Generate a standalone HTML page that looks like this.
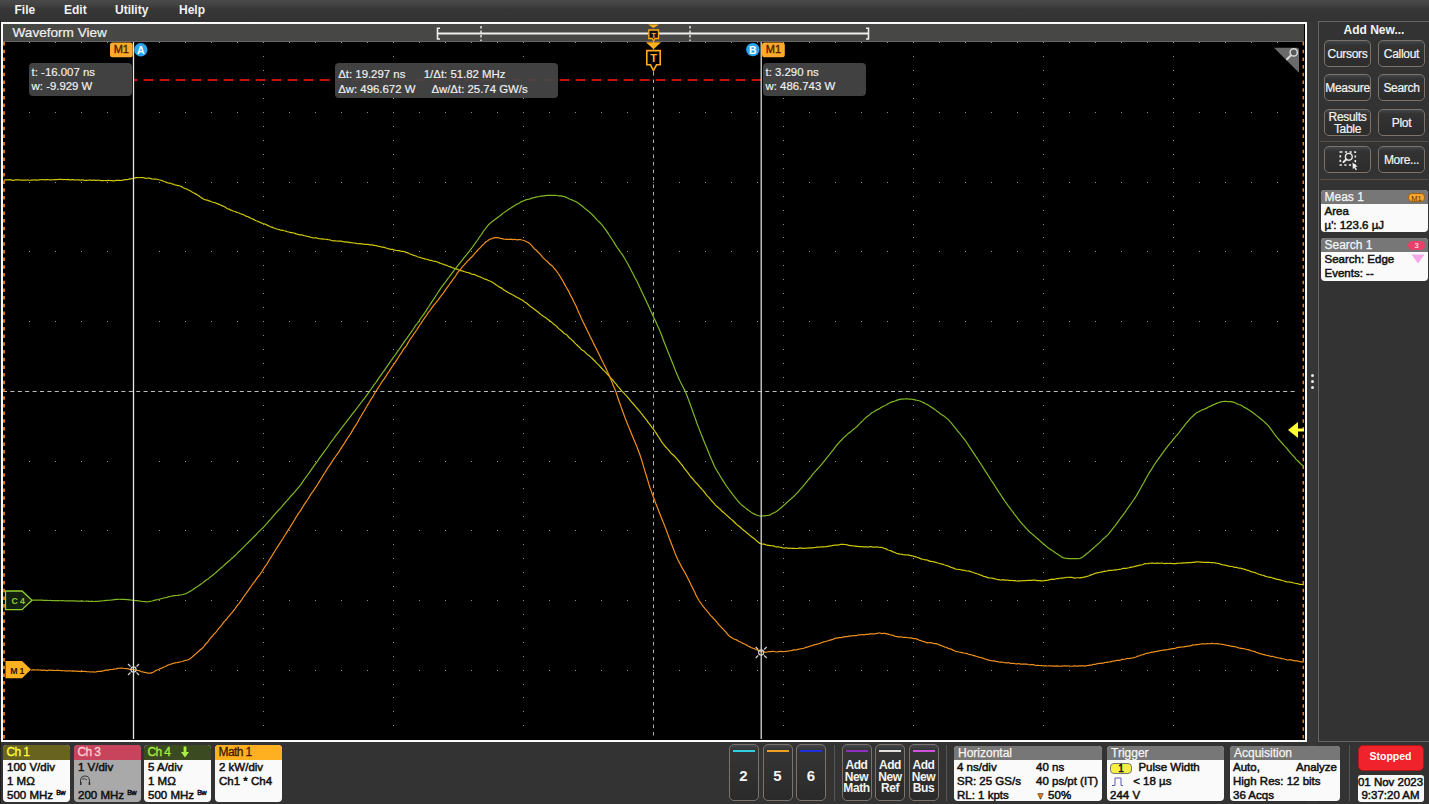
<!DOCTYPE html>
<html><head><meta charset="utf-8">
<style>
*{box-sizing:border-box;margin:0;padding:0}
html,body{width:1429px;height:804px;overflow:hidden;background:#333333;font-family:"Liberation Sans",sans-serif;}
.a{position:absolute}
#menu{left:0;top:0;width:1429px;height:21px;background:linear-gradient(#4a4a4a 0,#404040 6px,#363636 9px,#333 21px);}
#menu span{position:absolute;top:3px;font-size:12px;font-weight:bold;color:#f2f2f2;}
#frame{left:1px;top:21.5px;width:1306px;height:720px;border:2.5px solid #fafafa;background:#000;}
#hdr{left:3px;top:24px;width:1301px;height:18px;background:#474745;border-bottom:1px solid #666;}
#hdr .t{position:absolute;left:9.5px;top:1px;font-size:13.6px;color:#f0f0f0;-webkit-text-stroke:0.2px #f0f0f0}
.ro{position:absolute;background:rgba(70,70,70,0.92);border-radius:4px;color:#f2f2f2;font-size:11.4px;-webkit-text-stroke:0.15px #f2f2f2;line-height:13.6px;padding:3px 0 0 3px;white-space:pre}
.btn{position:absolute;width:47px;height:27px;border:1px solid #7c746c;border-radius:5px;background:linear-gradient(#42464a 0,#333 4px,#2c2c2c 100%);color:#f4f4f4;font-size:12px;text-align:center;line-height:26px;letter-spacing:-0.3px;-webkit-text-stroke:0.2px #f4f4f4}
.badge{position:absolute;top:745px;height:57px;border-radius:4px;overflow:hidden;background:#fafafa;}
.badge .h{position:relative;height:14.5px;font-size:12px;line-height:15px;padding-left:3.5px;letter-spacing:-0.6px;-webkit-text-stroke:0.3px currentColor}
.badge .b{font-size:11.5px;font-weight:normal;-webkit-text-stroke:0.5px #111;color:#111;line-height:14px;padding-left:4px;padding-top:0.7px}
.box{position:absolute;top:746px;height:55px;border-radius:4px;overflow:hidden;background:#fafafa;}
.box .h{height:14px;background:#777;color:#f5f5f5;font-size:12px;line-height:14px;padding-left:4px;-webkit-text-stroke:0.25px #f5f5f5}
.box .b{position:relative;font-size:11.5px;font-weight:normal;-webkit-text-stroke:0.5px #111;color:#111;line-height:14px;}
.nb{position:absolute;top:744px;width:30px;height:57px;border:1px solid #7c746c;border-radius:5px;background:linear-gradient(#42464a 0,#353535 5px,#2a2a2a 100%);color:#f4f4f4;text-align:center;font-weight:bold;}
.nb i{position:absolute;left:3px;right:3px;top:5px;height:2px;}
</style></head><body>
<div id="menu" class="a"><span style="left:14.5px">File</span><span style="left:64px">Edit</span><span style="left:115px">Utility</span><span style="left:179px">Help</span></div>
<div class="a" style="left:0;top:21px;width:1px;height:783px;background:#1e1e1e"></div>
<div id="frame" class="a"></div>
<div id="hdr" class="a"><div class="t">Waveform View</div></div>

<svg class="a" style="left:0;top:0" width="1429" height="804" viewBox="0 0 1429 804">
<defs><clipPath id="pc"><rect x="3" y="42" width="1301" height="697"/></clipPath></defs>
<!-- timeline overview -->
<g stroke="#eeeeee" fill="none" stroke-width="1.6">
<path d="M440 28.2 H437.5 V39 H440"/>
<path d="M866 28.2 H868.5 V39 H866"/>
<line x1="438" y1="33.6" x2="868" y2="33.6" stroke-width="2"/>
<line x1="481" y1="26" x2="481" y2="41" stroke-dasharray="2.5 2" stroke-width="1.4"/>
<line x1="690" y1="26" x2="690" y2="41" stroke-dasharray="2.5 2" stroke-width="1.4"/>
</g>
<path d="M648 24.5 H659 L653.5 28 Z" fill="#ffb020"/>
<path d="M648.8 30 H658.5 V38.5 H655 L653.6 41 L652.2 38.5 H648.8 Z" fill="#111" stroke="#ffaa20" stroke-width="1.3"/>
<text x="653.6" y="37.6" font-size="8" font-weight="bold" fill="#ffb030" text-anchor="middle" font-family="Liberation Sans">T</text>

<g clip-path="url(#pc)">
<g fill="#909090"><rect x="29" y="42" width="1" height="1"/><rect x="55" y="42" width="1" height="1"/><rect x="81" y="42" width="1" height="1"/><rect x="107" y="42" width="1" height="1"/><rect x="133" y="42" width="1" height="1"/><rect x="159" y="42" width="1" height="1"/><rect x="185" y="42" width="1" height="1"/><rect x="211" y="42" width="1" height="1"/><rect x="237" y="42" width="1" height="1"/><rect x="263" y="42" width="1" height="1"/><rect x="289" y="42" width="1" height="1"/><rect x="315" y="42" width="1" height="1"/><rect x="341" y="42" width="1" height="1"/><rect x="367" y="42" width="1" height="1"/><rect x="393" y="42" width="1" height="1"/><rect x="419" y="42" width="1" height="1"/><rect x="445" y="42" width="1" height="1"/><rect x="471" y="42" width="1" height="1"/><rect x="497" y="42" width="1" height="1"/><rect x="523" y="42" width="1" height="1"/><rect x="549" y="42" width="1" height="1"/><rect x="575" y="42" width="1" height="1"/><rect x="601" y="42" width="1" height="1"/><rect x="627" y="42" width="1" height="1"/><rect x="653" y="42" width="1" height="1"/><rect x="679" y="42" width="1" height="1"/><rect x="705" y="42" width="1" height="1"/><rect x="731" y="42" width="1" height="1"/><rect x="757" y="42" width="1" height="1"/><rect x="783" y="42" width="1" height="1"/><rect x="809" y="42" width="1" height="1"/><rect x="835" y="42" width="1" height="1"/><rect x="861" y="42" width="1" height="1"/><rect x="887" y="42" width="1" height="1"/><rect x="913" y="42" width="1" height="1"/><rect x="939" y="42" width="1" height="1"/><rect x="965" y="42" width="1" height="1"/><rect x="991" y="42" width="1" height="1"/><rect x="1017" y="42" width="1" height="1"/><rect x="1043" y="42" width="1" height="1"/><rect x="1069" y="42" width="1" height="1"/><rect x="1095" y="42" width="1" height="1"/><rect x="1121" y="42" width="1" height="1"/><rect x="1147" y="42" width="1" height="1"/><rect x="1173" y="42" width="1" height="1"/><rect x="1199" y="42" width="1" height="1"/><rect x="1225" y="42" width="1" height="1"/><rect x="1251" y="42" width="1" height="1"/><rect x="1277" y="42" width="1" height="1"/><rect x="29" y="112" width="1" height="1"/><rect x="55" y="112" width="1" height="1"/><rect x="81" y="112" width="1" height="1"/><rect x="107" y="112" width="1" height="1"/><rect x="133" y="112" width="1" height="1"/><rect x="159" y="112" width="1" height="1"/><rect x="185" y="112" width="1" height="1"/><rect x="211" y="112" width="1" height="1"/><rect x="237" y="112" width="1" height="1"/><rect x="263" y="112" width="1" height="1"/><rect x="289" y="112" width="1" height="1"/><rect x="315" y="112" width="1" height="1"/><rect x="341" y="112" width="1" height="1"/><rect x="367" y="112" width="1" height="1"/><rect x="393" y="112" width="1" height="1"/><rect x="419" y="112" width="1" height="1"/><rect x="445" y="112" width="1" height="1"/><rect x="471" y="112" width="1" height="1"/><rect x="497" y="112" width="1" height="1"/><rect x="523" y="112" width="1" height="1"/><rect x="549" y="112" width="1" height="1"/><rect x="575" y="112" width="1" height="1"/><rect x="601" y="112" width="1" height="1"/><rect x="627" y="112" width="1" height="1"/><rect x="653" y="112" width="1" height="1"/><rect x="679" y="112" width="1" height="1"/><rect x="705" y="112" width="1" height="1"/><rect x="731" y="112" width="1" height="1"/><rect x="757" y="112" width="1" height="1"/><rect x="783" y="112" width="1" height="1"/><rect x="809" y="112" width="1" height="1"/><rect x="835" y="112" width="1" height="1"/><rect x="861" y="112" width="1" height="1"/><rect x="887" y="112" width="1" height="1"/><rect x="913" y="112" width="1" height="1"/><rect x="939" y="112" width="1" height="1"/><rect x="965" y="112" width="1" height="1"/><rect x="991" y="112" width="1" height="1"/><rect x="1017" y="112" width="1" height="1"/><rect x="1043" y="112" width="1" height="1"/><rect x="1069" y="112" width="1" height="1"/><rect x="1095" y="112" width="1" height="1"/><rect x="1121" y="112" width="1" height="1"/><rect x="1147" y="112" width="1" height="1"/><rect x="1173" y="112" width="1" height="1"/><rect x="1199" y="112" width="1" height="1"/><rect x="1225" y="112" width="1" height="1"/><rect x="1251" y="112" width="1" height="1"/><rect x="1277" y="112" width="1" height="1"/><rect x="29" y="182" width="1" height="1"/><rect x="55" y="182" width="1" height="1"/><rect x="81" y="182" width="1" height="1"/><rect x="107" y="182" width="1" height="1"/><rect x="133" y="182" width="1" height="1"/><rect x="159" y="182" width="1" height="1"/><rect x="185" y="182" width="1" height="1"/><rect x="211" y="182" width="1" height="1"/><rect x="237" y="182" width="1" height="1"/><rect x="263" y="182" width="1" height="1"/><rect x="289" y="182" width="1" height="1"/><rect x="315" y="182" width="1" height="1"/><rect x="341" y="182" width="1" height="1"/><rect x="367" y="182" width="1" height="1"/><rect x="393" y="182" width="1" height="1"/><rect x="419" y="182" width="1" height="1"/><rect x="445" y="182" width="1" height="1"/><rect x="471" y="182" width="1" height="1"/><rect x="497" y="182" width="1" height="1"/><rect x="523" y="182" width="1" height="1"/><rect x="549" y="182" width="1" height="1"/><rect x="575" y="182" width="1" height="1"/><rect x="601" y="182" width="1" height="1"/><rect x="627" y="182" width="1" height="1"/><rect x="653" y="182" width="1" height="1"/><rect x="679" y="182" width="1" height="1"/><rect x="705" y="182" width="1" height="1"/><rect x="731" y="182" width="1" height="1"/><rect x="757" y="182" width="1" height="1"/><rect x="783" y="182" width="1" height="1"/><rect x="809" y="182" width="1" height="1"/><rect x="835" y="182" width="1" height="1"/><rect x="861" y="182" width="1" height="1"/><rect x="887" y="182" width="1" height="1"/><rect x="913" y="182" width="1" height="1"/><rect x="939" y="182" width="1" height="1"/><rect x="965" y="182" width="1" height="1"/><rect x="991" y="182" width="1" height="1"/><rect x="1017" y="182" width="1" height="1"/><rect x="1043" y="182" width="1" height="1"/><rect x="1069" y="182" width="1" height="1"/><rect x="1095" y="182" width="1" height="1"/><rect x="1121" y="182" width="1" height="1"/><rect x="1147" y="182" width="1" height="1"/><rect x="1173" y="182" width="1" height="1"/><rect x="1199" y="182" width="1" height="1"/><rect x="1225" y="182" width="1" height="1"/><rect x="1251" y="182" width="1" height="1"/><rect x="1277" y="182" width="1" height="1"/><rect x="29" y="251" width="1" height="1"/><rect x="55" y="251" width="1" height="1"/><rect x="81" y="251" width="1" height="1"/><rect x="107" y="251" width="1" height="1"/><rect x="133" y="251" width="1" height="1"/><rect x="159" y="251" width="1" height="1"/><rect x="185" y="251" width="1" height="1"/><rect x="211" y="251" width="1" height="1"/><rect x="237" y="251" width="1" height="1"/><rect x="263" y="251" width="1" height="1"/><rect x="289" y="251" width="1" height="1"/><rect x="315" y="251" width="1" height="1"/><rect x="341" y="251" width="1" height="1"/><rect x="367" y="251" width="1" height="1"/><rect x="393" y="251" width="1" height="1"/><rect x="419" y="251" width="1" height="1"/><rect x="445" y="251" width="1" height="1"/><rect x="471" y="251" width="1" height="1"/><rect x="497" y="251" width="1" height="1"/><rect x="523" y="251" width="1" height="1"/><rect x="549" y="251" width="1" height="1"/><rect x="575" y="251" width="1" height="1"/><rect x="601" y="251" width="1" height="1"/><rect x="627" y="251" width="1" height="1"/><rect x="653" y="251" width="1" height="1"/><rect x="679" y="251" width="1" height="1"/><rect x="705" y="251" width="1" height="1"/><rect x="731" y="251" width="1" height="1"/><rect x="757" y="251" width="1" height="1"/><rect x="783" y="251" width="1" height="1"/><rect x="809" y="251" width="1" height="1"/><rect x="835" y="251" width="1" height="1"/><rect x="861" y="251" width="1" height="1"/><rect x="887" y="251" width="1" height="1"/><rect x="913" y="251" width="1" height="1"/><rect x="939" y="251" width="1" height="1"/><rect x="965" y="251" width="1" height="1"/><rect x="991" y="251" width="1" height="1"/><rect x="1017" y="251" width="1" height="1"/><rect x="1043" y="251" width="1" height="1"/><rect x="1069" y="251" width="1" height="1"/><rect x="1095" y="251" width="1" height="1"/><rect x="1121" y="251" width="1" height="1"/><rect x="1147" y="251" width="1" height="1"/><rect x="1173" y="251" width="1" height="1"/><rect x="1199" y="251" width="1" height="1"/><rect x="1225" y="251" width="1" height="1"/><rect x="1251" y="251" width="1" height="1"/><rect x="1277" y="251" width="1" height="1"/><rect x="29" y="321" width="1" height="1"/><rect x="55" y="321" width="1" height="1"/><rect x="81" y="321" width="1" height="1"/><rect x="107" y="321" width="1" height="1"/><rect x="133" y="321" width="1" height="1"/><rect x="159" y="321" width="1" height="1"/><rect x="185" y="321" width="1" height="1"/><rect x="211" y="321" width="1" height="1"/><rect x="237" y="321" width="1" height="1"/><rect x="263" y="321" width="1" height="1"/><rect x="289" y="321" width="1" height="1"/><rect x="315" y="321" width="1" height="1"/><rect x="341" y="321" width="1" height="1"/><rect x="367" y="321" width="1" height="1"/><rect x="393" y="321" width="1" height="1"/><rect x="419" y="321" width="1" height="1"/><rect x="445" y="321" width="1" height="1"/><rect x="471" y="321" width="1" height="1"/><rect x="497" y="321" width="1" height="1"/><rect x="523" y="321" width="1" height="1"/><rect x="549" y="321" width="1" height="1"/><rect x="575" y="321" width="1" height="1"/><rect x="601" y="321" width="1" height="1"/><rect x="627" y="321" width="1" height="1"/><rect x="653" y="321" width="1" height="1"/><rect x="679" y="321" width="1" height="1"/><rect x="705" y="321" width="1" height="1"/><rect x="731" y="321" width="1" height="1"/><rect x="757" y="321" width="1" height="1"/><rect x="783" y="321" width="1" height="1"/><rect x="809" y="321" width="1" height="1"/><rect x="835" y="321" width="1" height="1"/><rect x="861" y="321" width="1" height="1"/><rect x="887" y="321" width="1" height="1"/><rect x="913" y="321" width="1" height="1"/><rect x="939" y="321" width="1" height="1"/><rect x="965" y="321" width="1" height="1"/><rect x="991" y="321" width="1" height="1"/><rect x="1017" y="321" width="1" height="1"/><rect x="1043" y="321" width="1" height="1"/><rect x="1069" y="321" width="1" height="1"/><rect x="1095" y="321" width="1" height="1"/><rect x="1121" y="321" width="1" height="1"/><rect x="1147" y="321" width="1" height="1"/><rect x="1173" y="321" width="1" height="1"/><rect x="1199" y="321" width="1" height="1"/><rect x="1225" y="321" width="1" height="1"/><rect x="1251" y="321" width="1" height="1"/><rect x="1277" y="321" width="1" height="1"/><rect x="29" y="461" width="1" height="1"/><rect x="55" y="461" width="1" height="1"/><rect x="81" y="461" width="1" height="1"/><rect x="107" y="461" width="1" height="1"/><rect x="133" y="461" width="1" height="1"/><rect x="159" y="461" width="1" height="1"/><rect x="185" y="461" width="1" height="1"/><rect x="211" y="461" width="1" height="1"/><rect x="237" y="461" width="1" height="1"/><rect x="263" y="461" width="1" height="1"/><rect x="289" y="461" width="1" height="1"/><rect x="315" y="461" width="1" height="1"/><rect x="341" y="461" width="1" height="1"/><rect x="367" y="461" width="1" height="1"/><rect x="393" y="461" width="1" height="1"/><rect x="419" y="461" width="1" height="1"/><rect x="445" y="461" width="1" height="1"/><rect x="471" y="461" width="1" height="1"/><rect x="497" y="461" width="1" height="1"/><rect x="523" y="461" width="1" height="1"/><rect x="549" y="461" width="1" height="1"/><rect x="575" y="461" width="1" height="1"/><rect x="601" y="461" width="1" height="1"/><rect x="627" y="461" width="1" height="1"/><rect x="653" y="461" width="1" height="1"/><rect x="679" y="461" width="1" height="1"/><rect x="705" y="461" width="1" height="1"/><rect x="731" y="461" width="1" height="1"/><rect x="757" y="461" width="1" height="1"/><rect x="783" y="461" width="1" height="1"/><rect x="809" y="461" width="1" height="1"/><rect x="835" y="461" width="1" height="1"/><rect x="861" y="461" width="1" height="1"/><rect x="887" y="461" width="1" height="1"/><rect x="913" y="461" width="1" height="1"/><rect x="939" y="461" width="1" height="1"/><rect x="965" y="461" width="1" height="1"/><rect x="991" y="461" width="1" height="1"/><rect x="1017" y="461" width="1" height="1"/><rect x="1043" y="461" width="1" height="1"/><rect x="1069" y="461" width="1" height="1"/><rect x="1095" y="461" width="1" height="1"/><rect x="1121" y="461" width="1" height="1"/><rect x="1147" y="461" width="1" height="1"/><rect x="1173" y="461" width="1" height="1"/><rect x="1199" y="461" width="1" height="1"/><rect x="1225" y="461" width="1" height="1"/><rect x="1251" y="461" width="1" height="1"/><rect x="1277" y="461" width="1" height="1"/><rect x="29" y="530" width="1" height="1"/><rect x="55" y="530" width="1" height="1"/><rect x="81" y="530" width="1" height="1"/><rect x="107" y="530" width="1" height="1"/><rect x="133" y="530" width="1" height="1"/><rect x="159" y="530" width="1" height="1"/><rect x="185" y="530" width="1" height="1"/><rect x="211" y="530" width="1" height="1"/><rect x="237" y="530" width="1" height="1"/><rect x="263" y="530" width="1" height="1"/><rect x="289" y="530" width="1" height="1"/><rect x="315" y="530" width="1" height="1"/><rect x="341" y="530" width="1" height="1"/><rect x="367" y="530" width="1" height="1"/><rect x="393" y="530" width="1" height="1"/><rect x="419" y="530" width="1" height="1"/><rect x="445" y="530" width="1" height="1"/><rect x="471" y="530" width="1" height="1"/><rect x="497" y="530" width="1" height="1"/><rect x="523" y="530" width="1" height="1"/><rect x="549" y="530" width="1" height="1"/><rect x="575" y="530" width="1" height="1"/><rect x="601" y="530" width="1" height="1"/><rect x="627" y="530" width="1" height="1"/><rect x="653" y="530" width="1" height="1"/><rect x="679" y="530" width="1" height="1"/><rect x="705" y="530" width="1" height="1"/><rect x="731" y="530" width="1" height="1"/><rect x="757" y="530" width="1" height="1"/><rect x="783" y="530" width="1" height="1"/><rect x="809" y="530" width="1" height="1"/><rect x="835" y="530" width="1" height="1"/><rect x="861" y="530" width="1" height="1"/><rect x="887" y="530" width="1" height="1"/><rect x="913" y="530" width="1" height="1"/><rect x="939" y="530" width="1" height="1"/><rect x="965" y="530" width="1" height="1"/><rect x="991" y="530" width="1" height="1"/><rect x="1017" y="530" width="1" height="1"/><rect x="1043" y="530" width="1" height="1"/><rect x="1069" y="530" width="1" height="1"/><rect x="1095" y="530" width="1" height="1"/><rect x="1121" y="530" width="1" height="1"/><rect x="1147" y="530" width="1" height="1"/><rect x="1173" y="530" width="1" height="1"/><rect x="1199" y="530" width="1" height="1"/><rect x="1225" y="530" width="1" height="1"/><rect x="1251" y="530" width="1" height="1"/><rect x="1277" y="530" width="1" height="1"/><rect x="29" y="600" width="1" height="1"/><rect x="55" y="600" width="1" height="1"/><rect x="81" y="600" width="1" height="1"/><rect x="107" y="600" width="1" height="1"/><rect x="133" y="600" width="1" height="1"/><rect x="159" y="600" width="1" height="1"/><rect x="185" y="600" width="1" height="1"/><rect x="211" y="600" width="1" height="1"/><rect x="237" y="600" width="1" height="1"/><rect x="263" y="600" width="1" height="1"/><rect x="289" y="600" width="1" height="1"/><rect x="315" y="600" width="1" height="1"/><rect x="341" y="600" width="1" height="1"/><rect x="367" y="600" width="1" height="1"/><rect x="393" y="600" width="1" height="1"/><rect x="419" y="600" width="1" height="1"/><rect x="445" y="600" width="1" height="1"/><rect x="471" y="600" width="1" height="1"/><rect x="497" y="600" width="1" height="1"/><rect x="523" y="600" width="1" height="1"/><rect x="549" y="600" width="1" height="1"/><rect x="575" y="600" width="1" height="1"/><rect x="601" y="600" width="1" height="1"/><rect x="627" y="600" width="1" height="1"/><rect x="653" y="600" width="1" height="1"/><rect x="679" y="600" width="1" height="1"/><rect x="705" y="600" width="1" height="1"/><rect x="731" y="600" width="1" height="1"/><rect x="757" y="600" width="1" height="1"/><rect x="783" y="600" width="1" height="1"/><rect x="809" y="600" width="1" height="1"/><rect x="835" y="600" width="1" height="1"/><rect x="861" y="600" width="1" height="1"/><rect x="887" y="600" width="1" height="1"/><rect x="913" y="600" width="1" height="1"/><rect x="939" y="600" width="1" height="1"/><rect x="965" y="600" width="1" height="1"/><rect x="991" y="600" width="1" height="1"/><rect x="1017" y="600" width="1" height="1"/><rect x="1043" y="600" width="1" height="1"/><rect x="1069" y="600" width="1" height="1"/><rect x="1095" y="600" width="1" height="1"/><rect x="1121" y="600" width="1" height="1"/><rect x="1147" y="600" width="1" height="1"/><rect x="1173" y="600" width="1" height="1"/><rect x="1199" y="600" width="1" height="1"/><rect x="1225" y="600" width="1" height="1"/><rect x="1251" y="600" width="1" height="1"/><rect x="1277" y="600" width="1" height="1"/><rect x="29" y="670" width="1" height="1"/><rect x="55" y="670" width="1" height="1"/><rect x="81" y="670" width="1" height="1"/><rect x="107" y="670" width="1" height="1"/><rect x="133" y="670" width="1" height="1"/><rect x="159" y="670" width="1" height="1"/><rect x="185" y="670" width="1" height="1"/><rect x="211" y="670" width="1" height="1"/><rect x="237" y="670" width="1" height="1"/><rect x="263" y="670" width="1" height="1"/><rect x="289" y="670" width="1" height="1"/><rect x="315" y="670" width="1" height="1"/><rect x="341" y="670" width="1" height="1"/><rect x="367" y="670" width="1" height="1"/><rect x="393" y="670" width="1" height="1"/><rect x="419" y="670" width="1" height="1"/><rect x="445" y="670" width="1" height="1"/><rect x="471" y="670" width="1" height="1"/><rect x="497" y="670" width="1" height="1"/><rect x="523" y="670" width="1" height="1"/><rect x="549" y="670" width="1" height="1"/><rect x="575" y="670" width="1" height="1"/><rect x="601" y="670" width="1" height="1"/><rect x="627" y="670" width="1" height="1"/><rect x="653" y="670" width="1" height="1"/><rect x="679" y="670" width="1" height="1"/><rect x="705" y="670" width="1" height="1"/><rect x="731" y="670" width="1" height="1"/><rect x="757" y="670" width="1" height="1"/><rect x="783" y="670" width="1" height="1"/><rect x="809" y="670" width="1" height="1"/><rect x="835" y="670" width="1" height="1"/><rect x="861" y="670" width="1" height="1"/><rect x="887" y="670" width="1" height="1"/><rect x="913" y="670" width="1" height="1"/><rect x="939" y="670" width="1" height="1"/><rect x="965" y="670" width="1" height="1"/><rect x="991" y="670" width="1" height="1"/><rect x="1017" y="670" width="1" height="1"/><rect x="1043" y="670" width="1" height="1"/><rect x="1069" y="670" width="1" height="1"/><rect x="1095" y="670" width="1" height="1"/><rect x="1121" y="670" width="1" height="1"/><rect x="1147" y="670" width="1" height="1"/><rect x="1173" y="670" width="1" height="1"/><rect x="1199" y="670" width="1" height="1"/><rect x="1225" y="670" width="1" height="1"/><rect x="1251" y="670" width="1" height="1"/><rect x="1277" y="670" width="1" height="1"/><rect x="133" y="56" width="1" height="1"/><rect x="133" y="70" width="1" height="1"/><rect x="133" y="84" width="1" height="1"/><rect x="133" y="98" width="1" height="1"/><rect x="133" y="126" width="1" height="1"/><rect x="133" y="140" width="1" height="1"/><rect x="133" y="154" width="1" height="1"/><rect x="133" y="168" width="1" height="1"/><rect x="133" y="196" width="1" height="1"/><rect x="133" y="210" width="1" height="1"/><rect x="133" y="224" width="1" height="1"/><rect x="133" y="237" width="1" height="1"/><rect x="133" y="265" width="1" height="1"/><rect x="133" y="279" width="1" height="1"/><rect x="133" y="293" width="1" height="1"/><rect x="133" y="307" width="1" height="1"/><rect x="133" y="335" width="1" height="1"/><rect x="133" y="349" width="1" height="1"/><rect x="133" y="363" width="1" height="1"/><rect x="133" y="377" width="1" height="1"/><rect x="133" y="405" width="1" height="1"/><rect x="133" y="419" width="1" height="1"/><rect x="133" y="433" width="1" height="1"/><rect x="133" y="447" width="1" height="1"/><rect x="133" y="474" width="1" height="1"/><rect x="133" y="488" width="1" height="1"/><rect x="133" y="502" width="1" height="1"/><rect x="133" y="516" width="1" height="1"/><rect x="133" y="544" width="1" height="1"/><rect x="133" y="558" width="1" height="1"/><rect x="133" y="572" width="1" height="1"/><rect x="133" y="586" width="1" height="1"/><rect x="133" y="614" width="1" height="1"/><rect x="133" y="628" width="1" height="1"/><rect x="133" y="642" width="1" height="1"/><rect x="133" y="656" width="1" height="1"/><rect x="133" y="684" width="1" height="1"/><rect x="133" y="697" width="1" height="1"/><rect x="133" y="711" width="1" height="1"/><rect x="133" y="725" width="1" height="1"/><rect x="263" y="56" width="1" height="1"/><rect x="263" y="70" width="1" height="1"/><rect x="263" y="84" width="1" height="1"/><rect x="263" y="98" width="1" height="1"/><rect x="263" y="126" width="1" height="1"/><rect x="263" y="140" width="1" height="1"/><rect x="263" y="154" width="1" height="1"/><rect x="263" y="168" width="1" height="1"/><rect x="263" y="196" width="1" height="1"/><rect x="263" y="210" width="1" height="1"/><rect x="263" y="224" width="1" height="1"/><rect x="263" y="237" width="1" height="1"/><rect x="263" y="265" width="1" height="1"/><rect x="263" y="279" width="1" height="1"/><rect x="263" y="293" width="1" height="1"/><rect x="263" y="307" width="1" height="1"/><rect x="263" y="335" width="1" height="1"/><rect x="263" y="349" width="1" height="1"/><rect x="263" y="363" width="1" height="1"/><rect x="263" y="377" width="1" height="1"/><rect x="263" y="405" width="1" height="1"/><rect x="263" y="419" width="1" height="1"/><rect x="263" y="433" width="1" height="1"/><rect x="263" y="447" width="1" height="1"/><rect x="263" y="474" width="1" height="1"/><rect x="263" y="488" width="1" height="1"/><rect x="263" y="502" width="1" height="1"/><rect x="263" y="516" width="1" height="1"/><rect x="263" y="544" width="1" height="1"/><rect x="263" y="558" width="1" height="1"/><rect x="263" y="572" width="1" height="1"/><rect x="263" y="586" width="1" height="1"/><rect x="263" y="614" width="1" height="1"/><rect x="263" y="628" width="1" height="1"/><rect x="263" y="642" width="1" height="1"/><rect x="263" y="656" width="1" height="1"/><rect x="263" y="684" width="1" height="1"/><rect x="263" y="697" width="1" height="1"/><rect x="263" y="711" width="1" height="1"/><rect x="263" y="725" width="1" height="1"/><rect x="393" y="56" width="1" height="1"/><rect x="393" y="70" width="1" height="1"/><rect x="393" y="84" width="1" height="1"/><rect x="393" y="98" width="1" height="1"/><rect x="393" y="126" width="1" height="1"/><rect x="393" y="140" width="1" height="1"/><rect x="393" y="154" width="1" height="1"/><rect x="393" y="168" width="1" height="1"/><rect x="393" y="196" width="1" height="1"/><rect x="393" y="210" width="1" height="1"/><rect x="393" y="224" width="1" height="1"/><rect x="393" y="237" width="1" height="1"/><rect x="393" y="265" width="1" height="1"/><rect x="393" y="279" width="1" height="1"/><rect x="393" y="293" width="1" height="1"/><rect x="393" y="307" width="1" height="1"/><rect x="393" y="335" width="1" height="1"/><rect x="393" y="349" width="1" height="1"/><rect x="393" y="363" width="1" height="1"/><rect x="393" y="377" width="1" height="1"/><rect x="393" y="405" width="1" height="1"/><rect x="393" y="419" width="1" height="1"/><rect x="393" y="433" width="1" height="1"/><rect x="393" y="447" width="1" height="1"/><rect x="393" y="474" width="1" height="1"/><rect x="393" y="488" width="1" height="1"/><rect x="393" y="502" width="1" height="1"/><rect x="393" y="516" width="1" height="1"/><rect x="393" y="544" width="1" height="1"/><rect x="393" y="558" width="1" height="1"/><rect x="393" y="572" width="1" height="1"/><rect x="393" y="586" width="1" height="1"/><rect x="393" y="614" width="1" height="1"/><rect x="393" y="628" width="1" height="1"/><rect x="393" y="642" width="1" height="1"/><rect x="393" y="656" width="1" height="1"/><rect x="393" y="684" width="1" height="1"/><rect x="393" y="697" width="1" height="1"/><rect x="393" y="711" width="1" height="1"/><rect x="393" y="725" width="1" height="1"/><rect x="523" y="56" width="1" height="1"/><rect x="523" y="70" width="1" height="1"/><rect x="523" y="84" width="1" height="1"/><rect x="523" y="98" width="1" height="1"/><rect x="523" y="126" width="1" height="1"/><rect x="523" y="140" width="1" height="1"/><rect x="523" y="154" width="1" height="1"/><rect x="523" y="168" width="1" height="1"/><rect x="523" y="196" width="1" height="1"/><rect x="523" y="210" width="1" height="1"/><rect x="523" y="224" width="1" height="1"/><rect x="523" y="237" width="1" height="1"/><rect x="523" y="265" width="1" height="1"/><rect x="523" y="279" width="1" height="1"/><rect x="523" y="293" width="1" height="1"/><rect x="523" y="307" width="1" height="1"/><rect x="523" y="335" width="1" height="1"/><rect x="523" y="349" width="1" height="1"/><rect x="523" y="363" width="1" height="1"/><rect x="523" y="377" width="1" height="1"/><rect x="523" y="405" width="1" height="1"/><rect x="523" y="419" width="1" height="1"/><rect x="523" y="433" width="1" height="1"/><rect x="523" y="447" width="1" height="1"/><rect x="523" y="474" width="1" height="1"/><rect x="523" y="488" width="1" height="1"/><rect x="523" y="502" width="1" height="1"/><rect x="523" y="516" width="1" height="1"/><rect x="523" y="544" width="1" height="1"/><rect x="523" y="558" width="1" height="1"/><rect x="523" y="572" width="1" height="1"/><rect x="523" y="586" width="1" height="1"/><rect x="523" y="614" width="1" height="1"/><rect x="523" y="628" width="1" height="1"/><rect x="523" y="642" width="1" height="1"/><rect x="523" y="656" width="1" height="1"/><rect x="523" y="684" width="1" height="1"/><rect x="523" y="697" width="1" height="1"/><rect x="523" y="711" width="1" height="1"/><rect x="523" y="725" width="1" height="1"/><rect x="783" y="56" width="1" height="1"/><rect x="783" y="70" width="1" height="1"/><rect x="783" y="84" width="1" height="1"/><rect x="783" y="98" width="1" height="1"/><rect x="783" y="126" width="1" height="1"/><rect x="783" y="140" width="1" height="1"/><rect x="783" y="154" width="1" height="1"/><rect x="783" y="168" width="1" height="1"/><rect x="783" y="196" width="1" height="1"/><rect x="783" y="210" width="1" height="1"/><rect x="783" y="224" width="1" height="1"/><rect x="783" y="237" width="1" height="1"/><rect x="783" y="265" width="1" height="1"/><rect x="783" y="279" width="1" height="1"/><rect x="783" y="293" width="1" height="1"/><rect x="783" y="307" width="1" height="1"/><rect x="783" y="335" width="1" height="1"/><rect x="783" y="349" width="1" height="1"/><rect x="783" y="363" width="1" height="1"/><rect x="783" y="377" width="1" height="1"/><rect x="783" y="405" width="1" height="1"/><rect x="783" y="419" width="1" height="1"/><rect x="783" y="433" width="1" height="1"/><rect x="783" y="447" width="1" height="1"/><rect x="783" y="474" width="1" height="1"/><rect x="783" y="488" width="1" height="1"/><rect x="783" y="502" width="1" height="1"/><rect x="783" y="516" width="1" height="1"/><rect x="783" y="544" width="1" height="1"/><rect x="783" y="558" width="1" height="1"/><rect x="783" y="572" width="1" height="1"/><rect x="783" y="586" width="1" height="1"/><rect x="783" y="614" width="1" height="1"/><rect x="783" y="628" width="1" height="1"/><rect x="783" y="642" width="1" height="1"/><rect x="783" y="656" width="1" height="1"/><rect x="783" y="684" width="1" height="1"/><rect x="783" y="697" width="1" height="1"/><rect x="783" y="711" width="1" height="1"/><rect x="783" y="725" width="1" height="1"/><rect x="913" y="56" width="1" height="1"/><rect x="913" y="70" width="1" height="1"/><rect x="913" y="84" width="1" height="1"/><rect x="913" y="98" width="1" height="1"/><rect x="913" y="126" width="1" height="1"/><rect x="913" y="140" width="1" height="1"/><rect x="913" y="154" width="1" height="1"/><rect x="913" y="168" width="1" height="1"/><rect x="913" y="196" width="1" height="1"/><rect x="913" y="210" width="1" height="1"/><rect x="913" y="224" width="1" height="1"/><rect x="913" y="237" width="1" height="1"/><rect x="913" y="265" width="1" height="1"/><rect x="913" y="279" width="1" height="1"/><rect x="913" y="293" width="1" height="1"/><rect x="913" y="307" width="1" height="1"/><rect x="913" y="335" width="1" height="1"/><rect x="913" y="349" width="1" height="1"/><rect x="913" y="363" width="1" height="1"/><rect x="913" y="377" width="1" height="1"/><rect x="913" y="405" width="1" height="1"/><rect x="913" y="419" width="1" height="1"/><rect x="913" y="433" width="1" height="1"/><rect x="913" y="447" width="1" height="1"/><rect x="913" y="474" width="1" height="1"/><rect x="913" y="488" width="1" height="1"/><rect x="913" y="502" width="1" height="1"/><rect x="913" y="516" width="1" height="1"/><rect x="913" y="544" width="1" height="1"/><rect x="913" y="558" width="1" height="1"/><rect x="913" y="572" width="1" height="1"/><rect x="913" y="586" width="1" height="1"/><rect x="913" y="614" width="1" height="1"/><rect x="913" y="628" width="1" height="1"/><rect x="913" y="642" width="1" height="1"/><rect x="913" y="656" width="1" height="1"/><rect x="913" y="684" width="1" height="1"/><rect x="913" y="697" width="1" height="1"/><rect x="913" y="711" width="1" height="1"/><rect x="913" y="725" width="1" height="1"/><rect x="1043" y="56" width="1" height="1"/><rect x="1043" y="70" width="1" height="1"/><rect x="1043" y="84" width="1" height="1"/><rect x="1043" y="98" width="1" height="1"/><rect x="1043" y="126" width="1" height="1"/><rect x="1043" y="140" width="1" height="1"/><rect x="1043" y="154" width="1" height="1"/><rect x="1043" y="168" width="1" height="1"/><rect x="1043" y="196" width="1" height="1"/><rect x="1043" y="210" width="1" height="1"/><rect x="1043" y="224" width="1" height="1"/><rect x="1043" y="237" width="1" height="1"/><rect x="1043" y="265" width="1" height="1"/><rect x="1043" y="279" width="1" height="1"/><rect x="1043" y="293" width="1" height="1"/><rect x="1043" y="307" width="1" height="1"/><rect x="1043" y="335" width="1" height="1"/><rect x="1043" y="349" width="1" height="1"/><rect x="1043" y="363" width="1" height="1"/><rect x="1043" y="377" width="1" height="1"/><rect x="1043" y="405" width="1" height="1"/><rect x="1043" y="419" width="1" height="1"/><rect x="1043" y="433" width="1" height="1"/><rect x="1043" y="447" width="1" height="1"/><rect x="1043" y="474" width="1" height="1"/><rect x="1043" y="488" width="1" height="1"/><rect x="1043" y="502" width="1" height="1"/><rect x="1043" y="516" width="1" height="1"/><rect x="1043" y="544" width="1" height="1"/><rect x="1043" y="558" width="1" height="1"/><rect x="1043" y="572" width="1" height="1"/><rect x="1043" y="586" width="1" height="1"/><rect x="1043" y="614" width="1" height="1"/><rect x="1043" y="628" width="1" height="1"/><rect x="1043" y="642" width="1" height="1"/><rect x="1043" y="656" width="1" height="1"/><rect x="1043" y="684" width="1" height="1"/><rect x="1043" y="697" width="1" height="1"/><rect x="1043" y="711" width="1" height="1"/><rect x="1043" y="725" width="1" height="1"/><rect x="1173" y="56" width="1" height="1"/><rect x="1173" y="70" width="1" height="1"/><rect x="1173" y="84" width="1" height="1"/><rect x="1173" y="98" width="1" height="1"/><rect x="1173" y="126" width="1" height="1"/><rect x="1173" y="140" width="1" height="1"/><rect x="1173" y="154" width="1" height="1"/><rect x="1173" y="168" width="1" height="1"/><rect x="1173" y="196" width="1" height="1"/><rect x="1173" y="210" width="1" height="1"/><rect x="1173" y="224" width="1" height="1"/><rect x="1173" y="237" width="1" height="1"/><rect x="1173" y="265" width="1" height="1"/><rect x="1173" y="279" width="1" height="1"/><rect x="1173" y="293" width="1" height="1"/><rect x="1173" y="307" width="1" height="1"/><rect x="1173" y="335" width="1" height="1"/><rect x="1173" y="349" width="1" height="1"/><rect x="1173" y="363" width="1" height="1"/><rect x="1173" y="377" width="1" height="1"/><rect x="1173" y="405" width="1" height="1"/><rect x="1173" y="419" width="1" height="1"/><rect x="1173" y="433" width="1" height="1"/><rect x="1173" y="447" width="1" height="1"/><rect x="1173" y="474" width="1" height="1"/><rect x="1173" y="488" width="1" height="1"/><rect x="1173" y="502" width="1" height="1"/><rect x="1173" y="516" width="1" height="1"/><rect x="1173" y="544" width="1" height="1"/><rect x="1173" y="558" width="1" height="1"/><rect x="1173" y="572" width="1" height="1"/><rect x="1173" y="586" width="1" height="1"/><rect x="1173" y="614" width="1" height="1"/><rect x="1173" y="628" width="1" height="1"/><rect x="1173" y="642" width="1" height="1"/><rect x="1173" y="656" width="1" height="1"/><rect x="1173" y="684" width="1" height="1"/><rect x="1173" y="697" width="1" height="1"/><rect x="1173" y="711" width="1" height="1"/><rect x="1173" y="725" width="1" height="1"/></g>
<line x1="3" y1="391.5" x2="1296" y2="391.5" stroke="#bdbdbd" stroke-width="1" stroke-dasharray="4 3.4"/>
<line x1="653.5" y1="42" x2="653.5" y2="739" stroke="#b0b0b0" stroke-width="1" stroke-dasharray="3.5 4"/>
<!-- orange dashed borders -->
<line x1="4" y1="42" x2="4" y2="739" stroke="#e8821a" stroke-width="1.8" stroke-dasharray="3.5 4.2"/>
<line x1="1303.3" y1="42" x2="1303.3" y2="739" stroke="#e8821a" stroke-width="1.4" stroke-dasharray="3.5 4.2"/>
<!-- red dashed cursor line -->
<line x1="134" y1="80" x2="761" y2="80" stroke="#c81010" stroke-width="2" stroke-dasharray="10 6" stroke-dashoffset="6.4"/>
<!-- traces -->
<path d="M4.0 180.21 L5.0 179.83 L6.0 179.88 L7.0 179.91 L8.0 179.89 L9.0 179.83 L10.0 179.72 L11.0 179.82 L12.0 180.06 L13.0 180.37 L14.0 180.19 L15.0 179.97 L16.0 179.90 L17.0 179.84 L18.0 179.81 L19.0 179.91 L20.0 180.02 L21.0 180.05 L22.0 180.10 L23.0 180.04 L24.0 180.09 L25.0 180.22 L26.0 180.13 L27.0 179.97 L28.0 179.99 L29.0 180.16 L30.0 180.25 L31.0 180.06 L32.0 180.00 L33.0 180.03 L34.0 179.90 L35.0 179.92 L36.0 180.05 L37.0 180.04 L38.0 179.97 L39.0 179.81 L40.0 179.60 L41.0 179.74 L42.0 179.65 L43.0 179.57 L44.0 179.76 L45.0 179.83 L46.0 179.67 L47.0 179.58 L48.0 179.66 L49.0 179.77 L50.0 179.89 L51.0 179.85 L52.0 179.78 L53.0 179.76 L54.0 179.60 L55.0 179.50 L56.0 179.62 L57.0 179.64 L58.0 179.51 L59.0 179.43 L60.0 179.38 L61.0 179.28 L62.0 179.52 L63.0 179.57 L64.0 179.43 L65.0 179.49 L66.0 179.56 L67.0 179.59 L68.0 179.44 L69.0 179.55 L70.0 179.83 L71.0 179.83 L72.0 179.57 L73.0 179.66 L74.0 179.82 L75.0 179.90 L76.0 180.00 L77.0 179.88 L78.0 179.88 L79.0 179.94 L80.0 180.11 L81.0 180.07 L82.0 179.92 L83.0 179.94 L84.0 180.26 L85.0 180.35 L86.0 180.36 L87.0 180.38 L88.0 180.27 L89.0 180.12 L90.0 180.08 L91.0 180.20 L92.0 180.33 L93.0 180.18 L94.0 180.18 L95.0 180.31 L96.0 180.43 L97.0 180.43 L98.0 180.23 L99.0 180.19 L100.0 180.45 L101.0 180.68 L102.0 180.67 L103.0 180.56 L104.0 180.49 L105.0 180.51 L106.0 180.53 L107.0 180.54 L108.0 180.45 L109.0 180.47 L110.0 180.52 L111.0 180.59 L112.0 180.71 L113.0 180.93 L114.0 180.91 L115.0 180.67 L116.0 180.32 L117.0 180.32 L118.0 180.41 L119.0 180.39 L120.0 180.27 L121.0 180.48 L122.0 180.42 L123.0 180.03 L124.0 179.79 L125.0 179.68 L126.0 179.65 L127.0 179.64 L128.0 179.52 L129.0 179.18 L130.0 178.95 L131.0 178.80 L132.0 178.72 L133.0 178.52 L134.0 178.25 L135.0 177.86 L136.0 177.68 L137.0 177.64 L138.0 177.75 L139.0 177.66 L140.0 177.49 L141.0 177.50 L142.0 177.61 L143.0 177.61 L144.0 177.73 L145.0 178.10 L146.0 178.39 L147.0 178.27 L148.0 178.17 L149.0 178.18 L150.0 178.35 L151.0 178.70 L152.0 178.92 L153.0 178.98 L154.0 179.08 L155.0 179.19 L156.0 179.22 L157.0 179.23 L158.0 179.47 L159.0 179.77 L160.0 179.98 L161.0 180.27 L162.0 180.61 L163.0 181.06 L164.0 181.51 L165.0 181.79 L166.0 182.15 L167.0 182.59 L168.0 182.97 L169.0 183.17 L170.0 183.19 L171.0 183.53 L172.0 183.81 L173.0 184.12 L174.0 184.50 L175.0 184.82 L176.0 185.05 L177.0 185.27 L178.0 185.56 L179.0 185.71 L180.0 186.00 L181.0 186.42 L182.0 186.88 L183.0 187.54 L184.0 188.08 L185.0 188.54 L186.0 188.81 L187.0 189.18 L188.0 189.74 L189.0 190.27 L190.0 190.71 L191.0 191.27 L192.0 191.89 L193.0 192.53 L194.0 193.03 L195.0 193.64 L196.0 194.13 L197.0 194.65 L198.0 195.28 L199.0 195.95 L200.0 196.77 L201.0 197.54 L202.0 198.13 L203.0 198.76 L204.0 199.35 L205.0 199.68 L206.0 199.96 L207.0 200.17 L208.0 200.43 L209.0 200.83 L210.0 201.09 L211.0 201.54 L212.0 201.95 L213.0 202.31 L214.0 202.50 L215.0 202.73 L216.0 203.11 L217.0 203.45 L218.0 203.87 L219.0 204.34 L220.0 204.79 L221.0 205.23 L222.0 205.66 L223.0 206.11 L224.0 206.50 L225.0 207.10 L226.0 207.70 L227.0 208.43 L228.0 208.90 L229.0 209.12 L230.0 209.65 L231.0 210.11 L232.0 210.49 L233.0 210.96 L234.0 211.22 L235.0 211.46 L236.0 211.93 L237.0 212.39 L238.0 212.73 L239.0 213.04 L240.0 213.55 L241.0 213.93 L242.0 214.12 L243.0 214.51 L244.0 215.00 L245.0 215.53 L246.0 216.14 L247.0 216.46 L248.0 216.70 L249.0 217.16 L250.0 217.83 L251.0 218.48 L252.0 218.78 L253.0 219.16 L254.0 219.65 L255.0 220.17 L256.0 220.73 L257.0 221.03 L258.0 221.45 L259.0 221.89 L260.0 222.26 L261.0 222.63 L262.0 223.20 L263.0 223.53 L264.0 223.80 L265.0 224.10 L266.0 224.55 L267.0 225.14 L268.0 225.65 L269.0 226.07 L270.0 226.49 L271.0 226.81 L272.0 227.15 L273.0 227.58 L274.0 227.95 L275.0 228.27 L276.0 228.71 L277.0 229.08 L278.0 229.26 L279.0 229.47 L280.0 229.88 L281.0 230.22 L282.0 230.29 L283.0 230.45 L284.0 230.75 L285.0 231.00 L286.0 231.08 L287.0 231.48 L288.0 231.84 L289.0 232.03 L290.0 232.39 L291.0 232.59 L292.0 232.70 L293.0 232.88 L294.0 233.02 L295.0 233.41 L296.0 233.87 L297.0 234.06 L298.0 234.41 L299.0 234.61 L300.0 234.83 L301.0 234.89 L302.0 234.91 L303.0 235.27 L304.0 235.61 L305.0 235.75 L306.0 235.99 L307.0 236.36 L308.0 236.52 L309.0 236.63 L310.0 236.98 L311.0 237.34 L312.0 237.52 L313.0 237.81 L314.0 238.02 L315.0 237.95 L316.0 237.87 L317.0 237.99 L318.0 238.33 L319.0 238.62 L320.0 238.76 L321.0 238.86 L322.0 238.93 L323.0 239.07 L324.0 239.16 L325.0 239.23 L326.0 239.24 L327.0 239.36 L328.0 239.58 L329.0 239.72 L330.0 239.93 L331.0 240.24 L332.0 240.52 L333.0 240.87 L334.0 240.83 L335.0 240.73 L336.0 240.90 L337.0 240.99 L338.0 241.05 L339.0 241.21 L340.0 241.08 L341.0 241.03 L342.0 241.42 L343.0 241.68 L344.0 241.88 L345.0 241.83 L346.0 241.91 L347.0 242.19 L348.0 242.21 L349.0 242.42 L350.0 242.67 L351.0 242.69 L352.0 242.73 L353.0 242.89 L354.0 243.02 L355.0 243.06 L356.0 243.28 L357.0 243.55 L358.0 243.74 L359.0 243.60 L360.0 243.59 L361.0 243.81 L362.0 243.92 L363.0 244.06 L364.0 244.24 L365.0 244.39 L366.0 244.35 L367.0 244.31 L368.0 244.26 L369.0 244.57 L370.0 244.95 L371.0 244.94 L372.0 244.92 L373.0 245.06 L374.0 245.35 L375.0 245.47 L376.0 245.54 L377.0 245.84 L378.0 246.10 L379.0 246.31 L380.0 246.52 L381.0 246.91 L382.0 247.09 L383.0 247.19 L384.0 247.37 L385.0 247.69 L386.0 248.03 L387.0 248.28 L388.0 248.61 L389.0 248.91 L390.0 249.20 L391.0 249.36 L392.0 249.37 L393.0 249.45 L394.0 249.85 L395.0 250.19 L396.0 250.36 L397.0 250.49 L398.0 250.56 L399.0 250.66 L400.0 250.89 L401.0 251.24 L402.0 251.35 L403.0 251.36 L404.0 251.49 L405.0 251.91 L406.0 252.38 L407.0 252.63 L408.0 252.91 L409.0 253.48 L410.0 253.96 L411.0 254.30 L412.0 254.66 L413.0 255.06 L414.0 255.40 L415.0 255.71 L416.0 256.04 L417.0 256.56 L418.0 256.97 L419.0 257.26 L420.0 257.32 L421.0 257.74 L422.0 258.11 L423.0 258.29 L424.0 258.60 L425.0 258.92 L426.0 259.12 L427.0 259.26 L428.0 259.58 L429.0 260.01 L430.0 260.30 L431.0 260.44 L432.0 260.65 L433.0 260.96 L434.0 261.22 L435.0 261.29 L436.0 261.53 L437.0 261.94 L438.0 262.25 L439.0 262.65 L440.0 263.13 L441.0 263.51 L442.0 263.80 L443.0 264.18 L444.0 264.45 L445.0 264.84 L446.0 265.09 L447.0 265.49 L448.0 266.04 L449.0 266.37 L450.0 266.66 L451.0 267.09 L452.0 267.56 L453.0 267.92 L454.0 268.31 L455.0 268.69 L456.0 268.89 L457.0 269.15 L458.0 269.56 L459.0 270.07 L460.0 270.45 L461.0 270.71 L462.0 270.86 L463.0 271.12 L464.0 271.46 L465.0 271.73 L466.0 272.10 L467.0 272.37 L468.0 272.53 L469.0 272.83 L470.0 273.27 L471.0 273.84 L472.0 274.23 L473.0 274.30 L474.0 274.42 L475.0 274.66 L476.0 275.23 L477.0 275.70 L478.0 276.08 L479.0 276.54 L480.0 276.84 L481.0 277.32 L482.0 277.77 L483.0 278.17 L484.0 278.77 L485.0 279.19 L486.0 279.33 L487.0 279.72 L488.0 280.33 L489.0 280.73 L490.0 281.04 L491.0 281.54 L492.0 282.09 L493.0 282.67 L494.0 283.34 L495.0 284.03 L496.0 284.80 L497.0 285.45 L498.0 286.03 L499.0 286.71 L500.0 287.38 L501.0 287.88 L502.0 288.39 L503.0 289.16 L504.0 289.90 L505.0 290.62 L506.0 291.16 L507.0 291.74 L508.0 292.39 L509.0 293.03 L510.0 293.45 L511.0 293.90 L512.0 294.46 L513.0 294.98 L514.0 295.56 L515.0 296.15 L516.0 296.81 L517.0 297.46 L518.0 297.84 L519.0 298.32 L520.0 298.90 L521.0 299.47 L522.0 299.92 L523.0 300.56 L524.0 301.37 L525.0 302.16 L526.0 302.85 L527.0 303.51 L528.0 304.29 L529.0 305.26 L530.0 306.16 L531.0 306.84 L532.0 307.55 L533.0 308.26 L534.0 308.92 L535.0 309.69 L536.0 310.53 L537.0 311.36 L538.0 312.06 L539.0 312.80 L540.0 313.81 L541.0 314.65 L542.0 315.22 L543.0 315.90 L544.0 316.64 L545.0 317.28 L546.0 317.89 L547.0 318.75 L548.0 319.48 L549.0 320.28 L550.0 321.00 L551.0 321.73 L552.0 322.63 L553.0 323.53 L554.0 324.27 L555.0 325.09 L556.0 325.91 L557.0 326.79 L558.0 327.92 L559.0 328.84 L560.0 329.66 L561.0 330.53 L562.0 331.26 L563.0 332.22 L564.0 333.29 L565.0 333.99 L566.0 334.37 L567.0 335.06 L568.0 336.25 L569.0 337.42 L570.0 338.27 L571.0 339.16 L572.0 340.11 L573.0 340.99 L574.0 342.05 L575.0 343.14 L576.0 344.12 L577.0 345.04 L578.0 345.95 L579.0 346.96 L580.0 347.94 L581.0 349.07 L582.0 350.01 L583.0 350.47 L584.0 351.06 L585.0 352.08 L586.0 353.15 L587.0 354.13 L588.0 354.92 L589.0 355.55 L590.0 356.40 L591.0 357.39 L592.0 358.23 L593.0 359.24 L594.0 360.22 L595.0 361.28 L596.0 362.37 L597.0 363.42 L598.0 364.39 L599.0 365.30 L600.0 366.40 L601.0 367.51 L602.0 368.64 L603.0 369.74 L604.0 370.64 L605.0 371.57 L606.0 372.62 L607.0 373.78 L608.0 374.93 L609.0 375.99 L610.0 377.20 L611.0 378.29 L612.0 379.27 L613.0 380.35 L614.0 381.65 L615.0 382.83 L616.0 383.90 L617.0 385.31 L618.0 386.62 L619.0 387.68 L620.0 388.90 L621.0 390.22 L622.0 391.22 L623.0 392.10 L624.0 393.22 L625.0 394.37 L626.0 395.40 L627.0 396.43 L628.0 397.76 L629.0 398.93 L630.0 400.10 L631.0 401.29 L632.0 402.47 L633.0 403.50 L634.0 404.59 L635.0 405.90 L636.0 407.14 L637.0 408.22 L638.0 409.42 L639.0 410.52 L640.0 411.68 L641.0 413.01 L642.0 414.21 L643.0 415.54 L644.0 416.81 L645.0 418.08 L646.0 419.27 L647.0 420.65 L648.0 422.18 L649.0 423.49 L650.0 424.74 L651.0 426.04 L652.0 427.37 L653.0 428.58 L654.0 429.97 L655.0 431.49 L656.0 432.94 L657.0 434.44 L658.0 436.00 L659.0 437.53 L660.0 439.11 L661.0 440.79 L662.0 442.31 L663.0 443.69 L664.0 444.93 L665.0 446.10 L666.0 447.25 L667.0 448.41 L668.0 449.43 L669.0 450.64 L670.0 451.94 L671.0 453.09 L672.0 453.97 L673.0 454.78 L674.0 455.78 L675.0 456.78 L676.0 457.87 L677.0 458.93 L678.0 460.16 L679.0 461.47 L680.0 462.63 L681.0 463.87 L682.0 464.99 L683.0 466.28 L684.0 467.85 L685.0 469.26 L686.0 470.43 L687.0 471.69 L688.0 472.97 L689.0 474.43 L690.0 475.85 L691.0 476.98 L692.0 478.00 L693.0 479.10 L694.0 480.41 L695.0 481.65 L696.0 482.73 L697.0 483.71 L698.0 484.77 L699.0 486.08 L700.0 487.15 L701.0 488.24 L702.0 489.36 L703.0 490.35 L704.0 491.64 L705.0 492.96 L706.0 494.27 L707.0 495.55 L708.0 496.57 L709.0 497.51 L710.0 498.78 L711.0 500.10 L712.0 501.22 L713.0 502.18 L714.0 503.28 L715.0 504.56 L716.0 505.63 L717.0 506.46 L718.0 507.32 L719.0 508.31 L720.0 508.98 L721.0 510.07 L722.0 511.27 L723.0 512.06 L724.0 512.83 L725.0 513.69 L726.0 514.69 L727.0 515.48 L728.0 516.42 L729.0 517.32 L730.0 518.17 L731.0 519.12 L732.0 519.88 L733.0 520.79 L734.0 521.78 L735.0 522.73 L736.0 523.73 L737.0 524.66 L738.0 525.42 L739.0 526.20 L740.0 527.06 L741.0 527.98 L742.0 528.92 L743.0 529.72 L744.0 530.54 L745.0 531.30 L746.0 532.09 L747.0 532.98 L748.0 533.73 L749.0 534.66 L750.0 535.57 L751.0 536.22 L752.0 536.95 L753.0 537.69 L754.0 538.51 L755.0 539.33 L756.0 540.23 L757.0 541.11 L758.0 542.03 L759.0 542.85 L760.0 543.36 L761.0 543.74 L762.0 543.98 L763.0 544.13 L764.0 544.20 L765.0 544.35 L766.0 544.79 L767.0 545.20 L768.0 545.29 L769.0 545.41 L770.0 545.68 L771.0 545.71 L772.0 545.73 L773.0 545.83 L774.0 546.07 L775.0 546.47 L776.0 546.84 L777.0 546.84 L778.0 546.83 L779.0 547.02 L780.0 547.19 L781.0 547.31 L782.0 547.65 L783.0 547.93 L784.0 548.04 L785.0 548.03 L786.0 547.87 L787.0 547.93 L788.0 548.28 L789.0 548.33 L790.0 548.14 L791.0 548.24 L792.0 548.37 L793.0 548.45 L794.0 548.44 L795.0 548.41 L796.0 548.48 L797.0 548.52 L798.0 548.40 L799.0 548.11 L800.0 547.96 L801.0 548.07 L802.0 548.14 L803.0 548.29 L804.0 548.36 L805.0 548.23 L806.0 548.09 L807.0 548.09 L808.0 548.08 L809.0 547.93 L810.0 547.95 L811.0 547.92 L812.0 547.85 L813.0 547.78 L814.0 547.59 L815.0 547.51 L816.0 547.29 L817.0 547.13 L818.0 547.09 L819.0 547.10 L820.0 546.97 L821.0 546.86 L822.0 546.78 L823.0 546.91 L824.0 546.93 L825.0 546.74 L826.0 546.66 L827.0 546.56 L828.0 546.46 L829.0 546.10 L830.0 545.83 L831.0 545.89 L832.0 545.69 L833.0 545.40 L834.0 545.22 L835.0 545.08 L836.0 545.06 L837.0 545.05 L838.0 545.15 L839.0 544.94 L840.0 544.52 L841.0 544.34 L842.0 544.30 L843.0 544.24 L844.0 544.39 L845.0 544.51 L846.0 544.56 L847.0 544.75 L848.0 545.11 L849.0 545.45 L850.0 545.61 L851.0 545.64 L852.0 545.75 L853.0 545.82 L854.0 545.98 L855.0 546.11 L856.0 546.30 L857.0 546.30 L858.0 546.40 L859.0 546.63 L860.0 546.70 L861.0 546.58 L862.0 546.65 L863.0 546.79 L864.0 546.81 L865.0 546.76 L866.0 546.83 L867.0 546.94 L868.0 547.10 L869.0 546.99 L870.0 546.70 L871.0 546.64 L872.0 546.95 L873.0 547.17 L874.0 547.18 L875.0 547.15 L876.0 547.00 L877.0 546.96 L878.0 547.16 L879.0 547.27 L880.0 547.29 L881.0 547.29 L882.0 547.54 L883.0 547.88 L884.0 548.29 L885.0 548.57 L886.0 548.90 L887.0 549.40 L888.0 549.96 L889.0 550.27 L890.0 550.50 L891.0 550.84 L892.0 551.35 L893.0 551.88 L894.0 552.07 L895.0 552.49 L896.0 553.08 L897.0 553.47 L898.0 553.65 L899.0 553.90 L900.0 554.13 L901.0 554.28 L902.0 554.41 L903.0 554.64 L904.0 554.75 L905.0 554.86 L906.0 554.85 L907.0 554.99 L908.0 554.96 L909.0 555.08 L910.0 555.39 L911.0 555.57 L912.0 555.79 L913.0 556.03 L914.0 556.45 L915.0 556.63 L916.0 556.80 L917.0 557.25 L918.0 557.65 L919.0 557.91 L920.0 558.39 L921.0 558.91 L922.0 559.14 L923.0 559.27 L924.0 559.53 L925.0 559.82 L926.0 559.85 L927.0 559.95 L928.0 560.40 L929.0 560.87 L930.0 561.34 L931.0 561.46 L932.0 561.47 L933.0 561.69 L934.0 562.03 L935.0 562.19 L936.0 562.41 L937.0 562.71 L938.0 562.99 L939.0 563.23 L940.0 563.53 L941.0 563.92 L942.0 564.11 L943.0 564.21 L944.0 564.71 L945.0 565.02 L946.0 565.30 L947.0 565.55 L948.0 565.97 L949.0 566.41 L950.0 566.85 L951.0 567.32 L952.0 567.65 L953.0 567.89 L954.0 568.34 L955.0 568.82 L956.0 569.11 L957.0 569.23 L958.0 569.38 L959.0 569.50 L960.0 569.54 L961.0 569.76 L962.0 570.13 L963.0 570.20 L964.0 570.27 L965.0 570.43 L966.0 570.80 L967.0 571.00 L968.0 570.99 L969.0 571.10 L970.0 571.34 L971.0 571.81 L972.0 572.07 L973.0 572.27 L974.0 572.74 L975.0 573.11 L976.0 573.44 L977.0 573.74 L978.0 574.00 L979.0 574.39 L980.0 574.86 L981.0 575.18 L982.0 575.56 L983.0 576.12 L984.0 576.35 L985.0 576.54 L986.0 576.90 L987.0 577.37 L988.0 577.71 L989.0 577.89 L990.0 578.00 L991.0 578.00 L992.0 578.19 L993.0 578.45 L994.0 578.71 L995.0 578.86 L996.0 579.03 L997.0 579.50 L998.0 579.54 L999.0 579.69 L1000.0 579.95 L1001.0 580.06 L1002.0 579.93 L1003.0 579.69 L1004.0 579.90 L1005.0 580.17 L1006.0 580.12 L1007.0 580.01 L1008.0 580.08 L1009.0 580.46 L1010.0 580.54 L1011.0 580.44 L1012.0 580.50 L1013.0 580.53 L1014.0 580.51 L1015.0 580.64 L1016.0 580.82 L1017.0 580.97 L1018.0 581.05 L1019.0 580.95 L1020.0 580.87 L1021.0 580.87 L1022.0 580.72 L1023.0 580.66 L1024.0 580.76 L1025.0 580.65 L1026.0 580.58 L1027.0 580.49 L1028.0 580.33 L1029.0 580.38 L1030.0 580.39 L1031.0 580.33 L1032.0 580.30 L1033.0 580.14 L1034.0 580.04 L1035.0 580.21 L1036.0 580.38 L1037.0 580.58 L1038.0 580.60 L1039.0 580.56 L1040.0 580.70 L1041.0 580.90 L1042.0 580.93 L1043.0 580.82 L1044.0 580.69 L1045.0 580.53 L1046.0 580.43 L1047.0 580.35 L1048.0 580.17 L1049.0 579.95 L1050.0 579.60 L1051.0 579.31 L1052.0 579.19 L1053.0 579.29 L1054.0 579.41 L1055.0 579.21 L1056.0 578.77 L1057.0 578.55 L1058.0 578.62 L1059.0 578.46 L1060.0 578.21 L1061.0 578.20 L1062.0 578.13 L1063.0 578.03 L1064.0 577.85 L1065.0 577.70 L1066.0 577.48 L1067.0 577.27 L1068.0 577.25 L1069.0 577.32 L1070.0 577.43 L1071.0 577.33 L1072.0 577.36 L1073.0 577.70 L1074.0 577.97 L1075.0 578.08 L1076.0 577.98 L1077.0 577.75 L1078.0 577.77 L1079.0 577.87 L1080.0 577.82 L1081.0 577.61 L1082.0 577.60 L1083.0 577.44 L1084.0 577.09 L1085.0 576.89 L1086.0 576.68 L1087.0 576.33 L1088.0 576.06 L1089.0 575.73 L1090.0 575.32 L1091.0 574.91 L1092.0 574.56 L1093.0 574.29 L1094.0 573.82 L1095.0 573.44 L1096.0 573.20 L1097.0 572.86 L1098.0 572.68 L1099.0 572.52 L1100.0 572.23 L1101.0 572.05 L1102.0 571.96 L1103.0 571.70 L1104.0 571.28 L1105.0 571.18 L1106.0 571.29 L1107.0 571.04 L1108.0 570.59 L1109.0 570.46 L1110.0 570.46 L1111.0 570.35 L1112.0 570.31 L1113.0 570.20 L1114.0 570.01 L1115.0 569.78 L1116.0 569.82 L1117.0 569.78 L1118.0 569.49 L1119.0 569.42 L1120.0 569.30 L1121.0 569.04 L1122.0 568.70 L1123.0 568.38 L1124.0 568.28 L1125.0 568.34 L1126.0 568.31 L1127.0 568.18 L1128.0 567.98 L1129.0 567.72 L1130.0 567.34 L1131.0 567.08 L1132.0 567.05 L1133.0 566.96 L1134.0 566.67 L1135.0 566.31 L1136.0 566.08 L1137.0 565.86 L1138.0 565.69 L1139.0 565.41 L1140.0 565.21 L1141.0 565.02 L1142.0 564.81 L1143.0 564.52 L1144.0 563.96 L1145.0 563.61 L1146.0 563.71 L1147.0 563.74 L1148.0 563.58 L1149.0 563.37 L1150.0 563.27 L1151.0 563.14 L1152.0 563.00 L1153.0 563.07 L1154.0 563.21 L1155.0 563.28 L1156.0 563.36 L1157.0 563.15 L1158.0 563.20 L1159.0 563.35 L1160.0 563.22 L1161.0 563.07 L1162.0 563.06 L1163.0 563.26 L1164.0 563.53 L1165.0 563.54 L1166.0 563.47 L1167.0 563.43 L1168.0 563.51 L1169.0 563.45 L1170.0 563.33 L1171.0 563.38 L1172.0 563.53 L1173.0 563.61 L1174.0 563.53 L1175.0 563.56 L1176.0 563.57 L1177.0 563.24 L1178.0 563.10 L1179.0 563.25 L1180.0 563.22 L1181.0 563.10 L1182.0 563.03 L1183.0 562.96 L1184.0 562.93 L1185.0 562.87 L1186.0 562.80 L1187.0 562.59 L1188.0 562.52 L1189.0 562.56 L1190.0 562.55 L1191.0 562.57 L1192.0 562.46 L1193.0 562.35 L1194.0 562.31 L1195.0 562.14 L1196.0 561.95 L1197.0 561.90 L1198.0 561.93 L1199.0 561.98 L1200.0 562.07 L1201.0 562.16 L1202.0 562.22 L1203.0 562.33 L1204.0 562.29 L1205.0 562.23 L1206.0 562.38 L1207.0 562.38 L1208.0 562.25 L1209.0 562.35 L1210.0 562.49 L1211.0 562.53 L1212.0 562.62 L1213.0 562.68 L1214.0 562.77 L1215.0 562.86 L1216.0 563.06 L1217.0 563.28 L1218.0 563.49 L1219.0 563.61 L1220.0 564.04 L1221.0 564.46 L1222.0 564.66 L1223.0 564.82 L1224.0 565.02 L1225.0 565.12 L1226.0 565.30 L1227.0 565.59 L1228.0 565.91 L1229.0 566.17 L1230.0 566.30 L1231.0 566.50 L1232.0 566.52 L1233.0 566.73 L1234.0 567.12 L1235.0 567.40 L1236.0 567.38 L1237.0 567.44 L1238.0 567.83 L1239.0 568.05 L1240.0 568.11 L1241.0 568.28 L1242.0 568.57 L1243.0 568.92 L1244.0 569.16 L1245.0 569.38 L1246.0 569.87 L1247.0 570.07 L1248.0 570.30 L1249.0 570.72 L1250.0 571.17 L1251.0 571.69 L1252.0 571.93 L1253.0 572.03 L1254.0 572.28 L1255.0 572.62 L1256.0 573.03 L1257.0 573.45 L1258.0 573.82 L1259.0 574.28 L1260.0 574.54 L1261.0 574.84 L1262.0 575.15 L1263.0 575.25 L1264.0 575.63 L1265.0 576.14 L1266.0 576.45 L1267.0 576.71 L1268.0 576.97 L1269.0 577.13 L1270.0 577.31 L1271.0 577.42 L1272.0 577.71 L1273.0 578.19 L1274.0 578.36 L1275.0 578.65 L1276.0 579.13 L1277.0 579.37 L1278.0 579.42 L1279.0 579.59 L1280.0 579.85 L1281.0 580.09 L1282.0 580.46 L1283.0 580.73 L1284.0 580.99 L1285.0 581.30 L1286.0 581.61 L1287.0 581.93 L1288.0 582.00 L1289.0 581.93 L1290.0 582.16 L1291.0 582.24 L1292.0 582.42 L1293.0 582.79 L1294.0 582.97 L1295.0 583.23 L1296.0 583.52 L1297.0 583.59 L1298.0 583.75 L1299.0 584.13 L1300.0 584.47 L1301.0 584.52 L1302.0 584.47 L1303.0 584.65 L1304.0 584.87" fill="none" stroke="#d0c800" stroke-width="1.2" stroke-linejoin="round"/>
<path d="M32.0 600.27 L33.0 600.21 L34.0 600.20 L35.0 600.19 L36.0 600.14 L37.0 600.17 L38.0 600.17 L39.0 600.12 L40.0 600.18 L41.0 600.22 L42.0 600.21 L43.0 600.32 L44.0 600.40 L45.0 600.39 L46.0 600.32 L47.0 600.39 L48.0 600.52 L49.0 600.49 L50.0 600.41 L51.0 600.49 L52.0 600.58 L53.0 600.56 L54.0 600.64 L55.0 600.75 L56.0 600.65 L57.0 600.55 L58.0 600.52 L59.0 600.60 L60.0 600.74 L61.0 600.68 L62.0 600.59 L63.0 600.62 L64.0 600.74 L65.0 600.81 L66.0 600.79 L67.0 600.84 L68.0 600.85 L69.0 600.90 L70.0 600.96 L71.0 600.97 L72.0 600.93 L73.0 600.95 L74.0 600.97 L75.0 600.94 L76.0 601.03 L77.0 601.13 L78.0 601.17 L79.0 601.13 L80.0 601.12 L81.0 601.13 L82.0 601.12 L83.0 601.17 L84.0 601.25 L85.0 601.24 L86.0 601.18 L87.0 601.16 L88.0 601.17 L89.0 601.30 L90.0 601.34 L91.0 601.35 L92.0 601.33 L93.0 601.40 L94.0 601.49 L95.0 601.47 L96.0 601.36 L97.0 601.36 L98.0 601.27 L99.0 601.15 L100.0 601.09 L101.0 600.98 L102.0 600.84 L103.0 600.74 L104.0 600.69 L105.0 600.60 L106.0 600.45 L107.0 600.30 L108.0 600.24 L109.0 600.25 L110.0 600.21 L111.0 600.09 L112.0 600.00 L113.0 599.81 L114.0 599.64 L115.0 599.58 L116.0 599.46 L117.0 599.43 L118.0 599.39 L119.0 599.25 L120.0 599.25 L121.0 599.35 L122.0 599.30 L123.0 599.31 L124.0 599.41 L125.0 599.46 L126.0 599.55 L127.0 599.61 L128.0 599.65 L129.0 599.87 L130.0 599.92 L131.0 600.01 L132.0 600.22 L133.0 600.31 L134.0 600.35 L135.0 600.48 L136.0 600.55 L137.0 600.63 L138.0 600.72 L139.0 600.90 L140.0 601.11 L141.0 601.25 L142.0 601.39 L143.0 601.52 L144.0 601.55 L145.0 601.59 L146.0 601.73 L147.0 601.86 L148.0 601.78 L149.0 601.64 L150.0 601.45 L151.0 601.26 L152.0 601.03 L153.0 600.75 L154.0 600.46 L155.0 600.16 L156.0 599.92 L157.0 599.77 L158.0 599.60 L159.0 599.34 L160.0 599.01 L161.0 598.71 L162.0 598.53 L163.0 598.26 L164.0 597.94 L165.0 597.78 L166.0 597.62 L167.0 597.36 L168.0 596.95 L169.0 596.68 L170.0 596.52 L171.0 596.24 L172.0 596.05 L173.0 595.88 L174.0 595.69 L175.0 595.53 L176.0 595.51 L177.0 595.48 L178.0 595.33 L179.0 595.14 L180.0 594.98 L181.0 594.90 L182.0 594.73 L183.0 594.49 L184.0 594.16 L185.0 593.90 L186.0 593.54 L187.0 593.14 L188.0 592.59 L189.0 591.94 L190.0 591.38 L191.0 590.82 L192.0 590.16 L193.0 589.44 L194.0 588.68 L195.0 587.98 L196.0 587.34 L197.0 586.79 L198.0 586.23 L199.0 585.53 L200.0 584.78 L201.0 584.04 L202.0 583.39 L203.0 582.61 L204.0 581.73 L205.0 580.97 L206.0 580.29 L207.0 579.61 L208.0 578.95 L209.0 578.11 L210.0 577.23 L211.0 576.51 L212.0 575.80 L213.0 574.93 L214.0 574.13 L215.0 573.33 L216.0 572.50 L217.0 571.56 L218.0 570.61 L219.0 569.76 L220.0 568.90 L221.0 568.04 L222.0 567.18 L223.0 566.35 L224.0 565.40 L225.0 564.46 L226.0 563.54 L227.0 562.68 L228.0 561.82 L229.0 560.97 L230.0 560.10 L231.0 559.13 L232.0 558.24 L233.0 557.42 L234.0 556.46 L235.0 555.52 L236.0 554.65 L237.0 553.60 L238.0 552.43 L239.0 551.53 L240.0 550.68 L241.0 549.70 L242.0 548.67 L243.0 547.71 L244.0 546.62 L245.0 545.60 L246.0 544.64 L247.0 543.68 L248.0 542.74 L249.0 541.76 L250.0 540.74 L251.0 539.74 L252.0 538.66 L253.0 537.69 L254.0 536.80 L255.0 535.77 L256.0 534.75 L257.0 533.68 L258.0 532.65 L259.0 531.67 L260.0 530.68 L261.0 529.67 L262.0 528.68 L263.0 527.72 L264.0 526.69 L265.0 525.56 L266.0 524.46 L267.0 523.30 L268.0 522.03 L269.0 520.90 L270.0 519.96 L271.0 518.87 L272.0 517.65 L273.0 516.45 L274.0 515.21 L275.0 514.05 L276.0 512.97 L277.0 511.84 L278.0 510.77 L279.0 509.63 L280.0 508.58 L281.0 507.59 L282.0 506.44 L283.0 505.19 L284.0 504.01 L285.0 502.77 L286.0 501.64 L287.0 500.61 L288.0 499.52 L289.0 498.32 L290.0 497.18 L291.0 496.00 L292.0 494.80 L293.0 493.75 L294.0 492.72 L295.0 491.54 L296.0 490.40 L297.0 489.24 L298.0 488.02 L299.0 486.89 L300.0 485.70 L301.0 484.38 L302.0 482.93 L303.0 481.40 L304.0 479.93 L305.0 478.50 L306.0 477.09 L307.0 475.75 L308.0 474.49 L309.0 473.12 L310.0 471.63 L311.0 470.19 L312.0 468.71 L313.0 467.29 L314.0 465.84 L315.0 464.43 L316.0 463.13 L317.0 461.77 L318.0 460.33 L319.0 458.89 L320.0 457.47 L321.0 456.10 L322.0 454.72 L323.0 453.32 L324.0 451.89 L325.0 450.56 L326.0 449.24 L327.0 447.90 L328.0 446.48 L329.0 444.98 L330.0 443.46 L331.0 442.03 L332.0 440.82 L333.0 439.63 L334.0 438.23 L335.0 436.67 L336.0 435.36 L337.0 434.10 L338.0 432.79 L339.0 431.53 L340.0 430.23 L341.0 428.88 L342.0 427.53 L343.0 426.13 L344.0 424.82 L345.0 423.58 L346.0 422.32 L347.0 420.92 L348.0 419.66 L349.0 418.44 L350.0 417.12 L351.0 415.80 L352.0 414.44 L353.0 413.17 L354.0 411.96 L355.0 410.72 L356.0 409.35 L357.0 408.00 L358.0 406.60 L359.0 405.29 L360.0 404.05 L361.0 402.74 L362.0 401.43 L363.0 400.14 L364.0 398.91 L365.0 397.55 L366.0 396.09 L367.0 394.82 L368.0 393.46 L369.0 392.06 L370.0 390.67 L371.0 389.27 L372.0 387.77 L373.0 386.32 L374.0 384.94 L375.0 383.62 L376.0 382.27 L377.0 380.84 L378.0 379.35 L379.0 377.80 L380.0 376.33 L381.0 375.02 L382.0 373.65 L383.0 372.27 L384.0 370.88 L385.0 369.36 L386.0 367.82 L387.0 366.33 L388.0 365.03 L389.0 363.63 L390.0 362.17 L391.0 360.76 L392.0 359.29 L393.0 357.94 L394.0 356.67 L395.0 355.25 L396.0 353.80 L397.0 352.35 L398.0 350.91 L399.0 349.51 L400.0 348.15 L401.0 346.64 L402.0 345.17 L403.0 343.68 L404.0 342.14 L405.0 340.58 L406.0 339.24 L407.0 338.08 L408.0 336.71 L409.0 335.16 L410.0 333.72 L411.0 332.30 L412.0 330.87 L413.0 329.50 L414.0 327.96 L415.0 326.42 L416.0 324.98 L417.0 323.76 L418.0 322.41 L419.0 320.98 L420.0 319.45 L421.0 318.02 L422.0 316.61 L423.0 315.22 L424.0 313.89 L425.0 312.44 L426.0 310.82 L427.0 309.19 L428.0 307.72 L429.0 306.25 L430.0 304.69 L431.0 303.14 L432.0 301.57 L433.0 299.99 L434.0 298.55 L435.0 297.08 L436.0 295.46 L437.0 293.97 L438.0 292.48 L439.0 290.90 L440.0 289.42 L441.0 287.95 L442.0 286.57 L443.0 285.19 L444.0 283.86 L445.0 282.56 L446.0 281.24 L447.0 279.84 L448.0 278.46 L449.0 277.26 L450.0 275.88 L451.0 274.43 L452.0 273.12 L453.0 271.81 L454.0 270.44 L455.0 269.13 L456.0 267.88 L457.0 266.63 L458.0 265.35 L459.0 264.13 L460.0 262.89 L461.0 261.64 L462.0 260.43 L463.0 259.10 L464.0 257.76 L465.0 256.57 L466.0 255.34 L467.0 254.09 L468.0 252.92 L469.0 251.75 L470.0 250.41 L471.0 249.07 L472.0 247.76 L473.0 246.46 L474.0 245.01 L475.0 243.50 L476.0 242.07 L477.0 240.75 L478.0 239.31 L479.0 237.73 L480.0 236.32 L481.0 235.01 L482.0 233.57 L483.0 232.00 L484.0 230.60 L485.0 229.25 L486.0 227.83 L487.0 226.51 L488.0 225.31 L489.0 224.27 L490.0 223.42 L491.0 222.59 L492.0 221.73 L493.0 221.03 L494.0 220.35 L495.0 219.58 L496.0 218.80 L497.0 218.01 L498.0 217.29 L499.0 216.52 L500.0 215.82 L501.0 214.96 L502.0 214.12 L503.0 213.35 L504.0 212.63 L505.0 211.88 L506.0 211.14 L507.0 210.47 L508.0 209.86 L509.0 209.20 L510.0 208.52 L511.0 207.89 L512.0 207.16 L513.0 206.48 L514.0 205.92 L515.0 205.37 L516.0 204.67 L517.0 204.11 L518.0 203.72 L519.0 203.23 L520.0 202.57 L521.0 201.86 L522.0 201.42 L523.0 201.07 L524.0 200.63 L525.0 200.19 L526.0 199.86 L527.0 199.52 L528.0 199.33 L529.0 199.24 L530.0 198.87 L531.0 198.38 L532.0 198.06 L533.0 197.88 L534.0 197.62 L535.0 197.38 L536.0 197.11 L537.0 196.91 L538.0 196.73 L539.0 196.46 L540.0 196.22 L541.0 196.10 L542.0 196.03 L543.0 195.93 L544.0 195.81 L545.0 195.68 L546.0 195.54 L547.0 195.40 L548.0 195.43 L549.0 195.41 L550.0 195.28 L551.0 195.26 L552.0 195.35 L553.0 195.39 L554.0 195.40 L555.0 195.41 L556.0 195.43 L557.0 195.52 L558.0 195.73 L559.0 195.84 L560.0 195.83 L561.0 195.95 L562.0 196.13 L563.0 196.29 L564.0 196.53 L565.0 196.84 L566.0 197.18 L567.0 197.68 L568.0 198.22 L569.0 198.77 L570.0 199.15 L571.0 199.46 L572.0 199.92 L573.0 200.48 L574.0 200.92 L575.0 201.28 L576.0 201.68 L577.0 202.19 L578.0 202.89 L579.0 203.65 L580.0 204.45 L581.0 205.28 L582.0 205.95 L583.0 206.78 L584.0 207.67 L585.0 208.52 L586.0 209.31 L587.0 209.95 L588.0 210.74 L589.0 211.65 L590.0 212.55 L591.0 213.43 L592.0 214.42 L593.0 215.49 L594.0 216.45 L595.0 217.54 L596.0 218.77 L597.0 219.88 L598.0 220.84 L599.0 221.74 L600.0 222.74 L601.0 223.80 L602.0 224.92 L603.0 226.18 L604.0 227.54 L605.0 228.83 L606.0 230.15 L607.0 231.60 L608.0 233.16 L609.0 234.76 L610.0 236.22 L611.0 237.78 L612.0 239.28 L613.0 240.79 L614.0 242.39 L615.0 244.07 L616.0 245.69 L617.0 247.25 L618.0 248.53 L619.0 249.91 L620.0 251.43 L621.0 252.86 L622.0 254.18 L623.0 255.61 L624.0 257.32 L625.0 259.01 L626.0 260.69 L627.0 262.46 L628.0 264.34 L629.0 266.19 L630.0 268.08 L631.0 270.02 L632.0 271.95 L633.0 273.78 L634.0 275.68 L635.0 277.67 L636.0 279.58 L637.0 281.51 L638.0 283.54 L639.0 285.65 L640.0 287.72 L641.0 289.95 L642.0 292.19 L643.0 294.24 L644.0 296.25 L645.0 298.37 L646.0 300.57 L647.0 302.66 L648.0 304.77 L649.0 306.97 L650.0 309.19 L651.0 311.42 L652.0 313.57 L653.0 315.80 L654.0 317.91 L655.0 320.09 L656.0 322.30 L657.0 324.49 L658.0 326.68 L659.0 328.84 L660.0 331.14 L661.0 333.69 L662.0 336.25 L663.0 338.95 L664.0 341.67 L665.0 344.24 L666.0 346.75 L667.0 349.28 L668.0 351.85 L669.0 354.34 L670.0 356.79 L671.0 359.33 L672.0 361.81 L673.0 364.33 L674.0 366.84 L675.0 369.40 L676.0 371.87 L677.0 374.23 L678.0 376.57 L679.0 378.89 L680.0 381.09 L681.0 383.08 L682.0 384.96 L683.0 386.90 L684.0 388.88 L685.0 390.88 L686.0 393.19 L687.0 395.70 L688.0 398.38 L689.0 401.03 L690.0 403.72 L691.0 406.46 L692.0 409.31 L693.0 412.20 L694.0 414.97 L695.0 417.60 L696.0 420.47 L697.0 423.47 L698.0 426.10 L699.0 428.65 L700.0 431.19 L701.0 433.67 L702.0 436.34 L703.0 438.79 L704.0 441.16 L705.0 443.67 L706.0 446.04 L707.0 448.44 L708.0 450.97 L709.0 453.41 L710.0 455.78 L711.0 458.15 L712.0 460.45 L713.0 462.79 L714.0 465.16 L715.0 467.28 L716.0 469.11 L717.0 470.81 L718.0 472.43 L719.0 474.04 L720.0 475.69 L721.0 477.40 L722.0 478.96 L723.0 480.56 L724.0 482.12 L725.0 483.69 L726.0 485.35 L727.0 486.76 L728.0 488.11 L729.0 489.49 L730.0 490.80 L731.0 492.12 L732.0 493.42 L733.0 494.78 L734.0 496.05 L735.0 497.30 L736.0 498.68 L737.0 499.92 L738.0 501.06 L739.0 502.27 L740.0 503.41 L741.0 504.39 L742.0 505.17 L743.0 506.02 L744.0 506.83 L745.0 507.63 L746.0 508.39 L747.0 509.19 L748.0 509.97 L749.0 510.62 L750.0 511.31 L751.0 512.12 L752.0 512.81 L753.0 513.40 L754.0 513.92 L755.0 514.35 L756.0 514.79 L757.0 515.13 L758.0 515.48 L759.0 515.80 L760.0 515.98 L761.0 516.03 L762.0 516.00 L763.0 515.89 L764.0 515.81 L765.0 515.79 L766.0 515.70 L767.0 515.52 L768.0 515.40 L769.0 515.23 L770.0 514.86 L771.0 514.31 L772.0 513.83 L773.0 513.33 L774.0 512.82 L775.0 512.29 L776.0 511.70 L777.0 511.05 L778.0 510.28 L779.0 509.46 L780.0 508.64 L781.0 507.82 L782.0 506.96 L783.0 506.03 L784.0 505.15 L785.0 504.23 L786.0 503.21 L787.0 502.33 L788.0 501.51 L789.0 500.60 L790.0 499.70 L791.0 498.91 L792.0 497.99 L793.0 497.09 L794.0 496.24 L795.0 495.17 L796.0 494.12 L797.0 493.06 L798.0 492.01 L799.0 490.90 L800.0 489.71 L801.0 488.58 L802.0 487.43 L803.0 486.27 L804.0 485.19 L805.0 483.96 L806.0 482.67 L807.0 481.41 L808.0 480.20 L809.0 479.00 L810.0 477.79 L811.0 476.56 L812.0 475.15 L813.0 473.92 L814.0 472.84 L815.0 471.69 L816.0 470.60 L817.0 469.49 L818.0 468.41 L819.0 467.31 L820.0 466.19 L821.0 465.03 L822.0 463.83 L823.0 462.61 L824.0 461.40 L825.0 460.13 L826.0 458.80 L827.0 457.51 L828.0 456.31 L829.0 455.11 L830.0 453.79 L831.0 452.60 L832.0 451.38 L833.0 450.15 L834.0 448.84 L835.0 447.48 L836.0 446.16 L837.0 444.85 L838.0 443.76 L839.0 442.63 L840.0 441.47 L841.0 440.50 L842.0 439.49 L843.0 438.42 L844.0 437.38 L845.0 436.48 L846.0 435.56 L847.0 434.58 L848.0 433.68 L849.0 432.96 L850.0 432.22 L851.0 431.41 L852.0 430.59 L853.0 429.73 L854.0 428.93 L855.0 428.14 L856.0 427.34 L857.0 426.52 L858.0 425.44 L859.0 424.33 L860.0 423.32 L861.0 422.26 L862.0 421.31 L863.0 420.35 L864.0 419.32 L865.0 418.36 L866.0 417.47 L867.0 416.67 L868.0 415.89 L869.0 415.20 L870.0 414.36 L871.0 413.46 L872.0 412.71 L873.0 412.21 L874.0 411.61 L875.0 410.96 L876.0 410.37 L877.0 409.83 L878.0 409.34 L879.0 408.91 L880.0 408.28 L881.0 407.58 L882.0 406.96 L883.0 406.38 L884.0 405.99 L885.0 405.56 L886.0 405.07 L887.0 404.46 L888.0 403.75 L889.0 403.24 L890.0 402.82 L891.0 402.36 L892.0 401.92 L893.0 401.61 L894.0 401.31 L895.0 400.99 L896.0 400.57 L897.0 400.18 L898.0 399.85 L899.0 399.56 L900.0 399.31 L901.0 399.17 L902.0 399.10 L903.0 399.04 L904.0 399.01 L905.0 398.95 L906.0 398.84 L907.0 398.79 L908.0 398.95 L909.0 399.07 L910.0 399.04 L911.0 399.11 L912.0 399.26 L913.0 399.44 L914.0 399.65 L915.0 399.85 L916.0 400.07 L917.0 400.24 L918.0 400.47 L919.0 400.72 L920.0 401.04 L921.0 401.51 L922.0 401.94 L923.0 402.39 L924.0 402.88 L925.0 403.44 L926.0 403.97 L927.0 404.39 L928.0 404.88 L929.0 405.59 L930.0 406.25 L931.0 406.87 L932.0 407.55 L933.0 408.25 L934.0 408.94 L935.0 409.62 L936.0 410.40 L937.0 411.16 L938.0 411.84 L939.0 412.61 L940.0 413.50 L941.0 414.21 L942.0 414.83 L943.0 415.45 L944.0 416.06 L945.0 416.87 L946.0 417.79 L947.0 418.63 L948.0 419.34 L949.0 420.36 L950.0 421.59 L951.0 422.72 L952.0 423.89 L953.0 425.12 L954.0 426.29 L955.0 427.52 L956.0 428.83 L957.0 430.06 L958.0 431.26 L959.0 432.53 L960.0 433.66 L961.0 435.01 L962.0 436.46 L963.0 437.63 L964.0 438.86 L965.0 440.14 L966.0 441.52 L967.0 442.97 L968.0 444.50 L969.0 446.11 L970.0 447.70 L971.0 449.19 L972.0 450.65 L973.0 452.08 L974.0 453.63 L975.0 455.15 L976.0 456.63 L977.0 458.04 L978.0 459.56 L979.0 461.19 L980.0 462.72 L981.0 464.20 L982.0 465.72 L983.0 467.33 L984.0 468.98 L985.0 470.56 L986.0 472.07 L987.0 473.64 L988.0 475.24 L989.0 476.80 L990.0 478.44 L991.0 479.99 L992.0 481.43 L993.0 482.83 L994.0 484.38 L995.0 485.99 L996.0 487.57 L997.0 489.14 L998.0 490.76 L999.0 492.31 L1000.0 493.76 L1001.0 495.26 L1002.0 496.92 L1003.0 498.43 L1004.0 499.87 L1005.0 501.26 L1006.0 502.69 L1007.0 504.12 L1008.0 505.50 L1009.0 506.87 L1010.0 508.22 L1011.0 509.58 L1012.0 510.77 L1013.0 512.15 L1014.0 513.61 L1015.0 514.91 L1016.0 516.16 L1017.0 517.45 L1018.0 518.81 L1019.0 519.99 L1020.0 521.27 L1021.0 522.52 L1022.0 523.75 L1023.0 524.90 L1024.0 525.91 L1025.0 526.98 L1026.0 528.07 L1027.0 529.14 L1028.0 530.26 L1029.0 531.22 L1030.0 532.11 L1031.0 532.96 L1032.0 533.86 L1033.0 534.73 L1034.0 535.60 L1035.0 536.48 L1036.0 537.41 L1037.0 538.17 L1038.0 538.96 L1039.0 539.97 L1040.0 540.86 L1041.0 541.77 L1042.0 542.78 L1043.0 543.54 L1044.0 544.25 L1045.0 545.14 L1046.0 546.05 L1047.0 546.89 L1048.0 547.72 L1049.0 548.42 L1050.0 549.02 L1051.0 549.72 L1052.0 550.44 L1053.0 551.07 L1054.0 551.75 L1055.0 552.51 L1056.0 553.15 L1057.0 553.71 L1058.0 554.40 L1059.0 555.12 L1060.0 555.81 L1061.0 556.49 L1062.0 557.16 L1063.0 557.59 L1064.0 557.95 L1065.0 558.23 L1066.0 558.29 L1067.0 558.42 L1068.0 558.54 L1069.0 558.49 L1070.0 558.53 L1071.0 558.66 L1072.0 558.67 L1073.0 558.62 L1074.0 558.59 L1075.0 558.56 L1076.0 558.59 L1077.0 558.66 L1078.0 558.75 L1079.0 558.58 L1080.0 558.27 L1081.0 557.91 L1082.0 557.37 L1083.0 556.63 L1084.0 555.93 L1085.0 555.20 L1086.0 554.25 L1087.0 553.42 L1088.0 552.72 L1089.0 551.88 L1090.0 550.94 L1091.0 550.13 L1092.0 549.28 L1093.0 548.47 L1094.0 547.56 L1095.0 546.62 L1096.0 545.77 L1097.0 544.84 L1098.0 543.92 L1099.0 543.09 L1100.0 542.12 L1101.0 541.17 L1102.0 540.12 L1103.0 539.07 L1104.0 538.18 L1105.0 537.38 L1106.0 536.56 L1107.0 535.65 L1108.0 534.53 L1109.0 533.34 L1110.0 532.13 L1111.0 530.95 L1112.0 529.66 L1113.0 528.30 L1114.0 527.16 L1115.0 525.97 L1116.0 524.64 L1117.0 523.15 L1118.0 521.79 L1119.0 520.44 L1120.0 519.02 L1121.0 517.66 L1122.0 516.34 L1123.0 515.06 L1124.0 513.72 L1125.0 512.31 L1126.0 510.75 L1127.0 509.25 L1128.0 507.91 L1129.0 506.55 L1130.0 505.16 L1131.0 503.72 L1132.0 502.21 L1133.0 500.75 L1134.0 499.24 L1135.0 497.80 L1136.0 496.30 L1137.0 494.65 L1138.0 492.90 L1139.0 491.07 L1140.0 489.30 L1141.0 487.53 L1142.0 485.67 L1143.0 483.94 L1144.0 482.29 L1145.0 480.40 L1146.0 478.45 L1147.0 476.69 L1148.0 474.99 L1149.0 473.16 L1150.0 471.59 L1151.0 470.08 L1152.0 468.47 L1153.0 466.88 L1154.0 465.26 L1155.0 463.74 L1156.0 462.27 L1157.0 460.81 L1158.0 459.41 L1159.0 458.06 L1160.0 456.73 L1161.0 455.32 L1162.0 453.92 L1163.0 452.59 L1164.0 451.22 L1165.0 449.79 L1166.0 448.41 L1167.0 447.16 L1168.0 445.94 L1169.0 444.64 L1170.0 443.45 L1171.0 442.38 L1172.0 441.09 L1173.0 439.72 L1174.0 438.50 L1175.0 437.38 L1176.0 436.16 L1177.0 435.03 L1178.0 433.86 L1179.0 432.62 L1180.0 431.29 L1181.0 429.98 L1182.0 428.59 L1183.0 427.36 L1184.0 426.17 L1185.0 424.83 L1186.0 423.46 L1187.0 422.35 L1188.0 421.24 L1189.0 420.07 L1190.0 418.94 L1191.0 417.88 L1192.0 416.88 L1193.0 415.95 L1194.0 415.01 L1195.0 414.14 L1196.0 413.29 L1197.0 412.53 L1198.0 412.06 L1199.0 411.64 L1200.0 411.05 L1201.0 410.56 L1202.0 410.06 L1203.0 409.61 L1204.0 409.24 L1205.0 408.86 L1206.0 408.39 L1207.0 407.89 L1208.0 407.35 L1209.0 406.77 L1210.0 406.36 L1211.0 405.91 L1212.0 405.39 L1213.0 404.90 L1214.0 404.46 L1215.0 404.10 L1216.0 403.60 L1217.0 403.15 L1218.0 402.83 L1219.0 402.48 L1220.0 402.20 L1221.0 401.97 L1222.0 401.66 L1223.0 401.52 L1224.0 401.47 L1225.0 401.30 L1226.0 401.34 L1227.0 401.49 L1228.0 401.61 L1229.0 401.64 L1230.0 401.58 L1231.0 401.70 L1232.0 401.89 L1233.0 402.11 L1234.0 402.40 L1235.0 402.77 L1236.0 403.28 L1237.0 403.72 L1238.0 404.07 L1239.0 404.53 L1240.0 404.92 L1241.0 405.29 L1242.0 405.79 L1243.0 406.54 L1244.0 407.16 L1245.0 407.65 L1246.0 408.16 L1247.0 408.73 L1248.0 409.42 L1249.0 410.09 L1250.0 410.76 L1251.0 411.39 L1252.0 411.98 L1253.0 412.71 L1254.0 413.52 L1255.0 414.25 L1256.0 415.10 L1257.0 415.89 L1258.0 416.59 L1259.0 417.43 L1260.0 418.25 L1261.0 419.05 L1262.0 419.81 L1263.0 420.67 L1264.0 421.60 L1265.0 422.55 L1266.0 423.43 L1267.0 424.34 L1268.0 425.36 L1269.0 426.61 L1270.0 427.91 L1271.0 429.28 L1272.0 430.71 L1273.0 432.14 L1274.0 433.49 L1275.0 434.79 L1276.0 436.12 L1277.0 437.42 L1278.0 438.55 L1279.0 439.74 L1280.0 440.93 L1281.0 441.98 L1282.0 443.09 L1283.0 444.23 L1284.0 445.37 L1285.0 446.37 L1286.0 447.33 L1287.0 448.53 L1288.0 449.80 L1289.0 451.04 L1290.0 452.27 L1291.0 453.53 L1292.0 454.63 L1293.0 455.62 L1294.0 456.68 L1295.0 457.81 L1296.0 459.06 L1297.0 460.09 L1298.0 461.03 L1299.0 461.99 L1300.0 463.07 L1301.0 464.13 L1302.0 465.03 L1303.0 465.79 L1304.0 466.39" fill="none" stroke="#80b820" stroke-width="1.2" stroke-linejoin="round"/>
<path d="M31.0 670.30 L32.0 669.96 L33.0 669.76 L34.0 669.84 L35.0 669.94 L36.0 669.99 L37.0 669.96 L38.0 669.91 L39.0 670.02 L40.0 670.07 L41.0 670.09 L42.0 670.40 L43.0 670.37 L44.0 670.04 L45.0 670.12 L46.0 670.39 L47.0 670.55 L48.0 670.44 L49.0 670.07 L50.0 670.02 L51.0 670.18 L52.0 670.29 L53.0 670.25 L54.0 670.38 L55.0 670.48 L56.0 670.43 L57.0 670.30 L58.0 670.38 L59.0 670.44 L60.0 670.50 L61.0 670.64 L62.0 670.66 L63.0 670.74 L64.0 670.74 L65.0 670.95 L66.0 670.97 L67.0 670.78 L68.0 670.82 L69.0 670.85 L70.0 670.83 L71.0 671.00 L72.0 671.04 L73.0 670.95 L74.0 671.07 L75.0 671.20 L76.0 671.14 L77.0 671.18 L78.0 671.34 L79.0 671.26 L80.0 671.38 L81.0 671.55 L82.0 671.45 L83.0 671.24 L84.0 671.33 L85.0 671.47 L86.0 671.57 L87.0 671.71 L88.0 671.77 L89.0 671.77 L90.0 671.85 L91.0 671.99 L92.0 671.94 L93.0 671.82 L94.0 672.03 L95.0 671.97 L96.0 671.83 L97.0 671.56 L98.0 671.41 L99.0 671.36 L100.0 671.44 L101.0 671.33 L102.0 671.05 L103.0 670.83 L104.0 670.64 L105.0 670.36 L106.0 670.16 L107.0 670.07 L108.0 670.05 L109.0 669.80 L110.0 669.53 L111.0 669.50 L112.0 669.49 L113.0 669.34 L114.0 669.04 L115.0 668.98 L116.0 668.93 L117.0 668.57 L118.0 668.33 L119.0 668.26 L120.0 668.15 L121.0 668.14 L122.0 668.15 L123.0 668.27 L124.0 668.49 L125.0 668.51 L126.0 668.53 L127.0 668.70 L128.0 668.90 L129.0 669.13 L130.0 669.38 L131.0 669.48 L132.0 669.35 L133.0 669.39 L134.0 669.54 L135.0 669.94 L136.0 670.25 L137.0 670.35 L138.0 670.48 L139.0 670.67 L140.0 670.97 L141.0 671.51 L142.0 671.87 L143.0 671.96 L144.0 672.28 L145.0 672.38 L146.0 672.48 L147.0 672.88 L148.0 673.17 L149.0 673.21 L150.0 673.18 L151.0 673.08 L152.0 672.67 L153.0 672.27 L154.0 671.77 L155.0 671.07 L156.0 670.41 L157.0 669.97 L158.0 669.71 L159.0 669.30 L160.0 668.69 L161.0 668.35 L162.0 668.04 L163.0 667.42 L164.0 667.06 L165.0 666.70 L166.0 666.18 L167.0 665.55 L168.0 665.12 L169.0 664.72 L170.0 664.47 L171.0 664.07 L172.0 663.76 L173.0 663.46 L174.0 663.17 L175.0 662.87 L176.0 662.77 L177.0 662.64 L178.0 662.43 L179.0 662.28 L180.0 661.99 L181.0 661.72 L182.0 661.52 L183.0 661.29 L184.0 660.82 L185.0 660.49 L186.0 660.29 L187.0 660.10 L188.0 659.80 L189.0 659.37 L190.0 658.72 L191.0 657.91 L192.0 657.14 L193.0 656.24 L194.0 655.26 L195.0 654.58 L196.0 653.67 L197.0 652.77 L198.0 651.93 L199.0 650.96 L200.0 649.97 L201.0 649.21 L202.0 648.48 L203.0 647.48 L204.0 646.28 L205.0 644.92 L206.0 643.75 L207.0 642.74 L208.0 641.58 L209.0 640.17 L210.0 638.72 L211.0 637.51 L212.0 636.51 L213.0 635.25 L214.0 634.18 L215.0 633.26 L216.0 632.21 L217.0 630.75 L218.0 629.38 L219.0 628.22 L220.0 627.11 L221.0 625.97 L222.0 624.64 L223.0 623.16 L224.0 621.83 L225.0 620.81 L226.0 619.72 L227.0 618.59 L228.0 617.24 L229.0 616.03 L230.0 614.79 L231.0 613.66 L232.0 612.68 L233.0 611.39 L234.0 610.07 L235.0 608.78 L236.0 607.33 L237.0 605.94 L238.0 604.69 L239.0 603.53 L240.0 602.10 L241.0 600.69 L242.0 599.30 L243.0 597.77 L244.0 596.23 L245.0 594.77 L246.0 593.55 L247.0 592.22 L248.0 590.82 L249.0 589.44 L250.0 587.87 L251.0 586.50 L252.0 585.01 L253.0 583.62 L254.0 582.44 L255.0 581.15 L256.0 579.55 L257.0 578.05 L258.0 576.81 L259.0 575.74 L260.0 574.35 L261.0 572.95 L262.0 571.62 L263.0 569.91 L264.0 568.12 L265.0 566.63 L266.0 565.24 L267.0 563.85 L268.0 562.11 L269.0 560.51 L270.0 558.90 L271.0 557.31 L272.0 555.76 L273.0 554.15 L274.0 552.45 L275.0 550.79 L276.0 549.21 L277.0 547.62 L278.0 546.09 L279.0 544.62 L280.0 543.09 L281.0 541.54 L282.0 540.01 L283.0 538.50 L284.0 536.69 L285.0 535.03 L286.0 533.57 L287.0 531.93 L288.0 530.40 L289.0 528.90 L290.0 527.21 L291.0 525.61 L292.0 524.12 L293.0 522.47 L294.0 520.71 L295.0 519.02 L296.0 517.42 L297.0 515.75 L298.0 514.20 L299.0 512.71 L300.0 511.34 L301.0 509.83 L302.0 508.14 L303.0 506.49 L304.0 504.85 L305.0 503.28 L306.0 501.89 L307.0 500.52 L308.0 499.02 L309.0 497.42 L310.0 495.64 L311.0 493.94 L312.0 492.74 L313.0 491.41 L314.0 489.86 L315.0 488.30 L316.0 486.85 L317.0 485.39 L318.0 483.70 L319.0 482.13 L320.0 480.53 L321.0 478.87 L322.0 477.19 L323.0 475.53 L324.0 473.95 L325.0 472.52 L326.0 470.90 L327.0 469.21 L328.0 467.65 L329.0 466.22 L330.0 464.91 L331.0 463.31 L332.0 461.66 L333.0 460.01 L334.0 458.57 L335.0 457.27 L336.0 455.77 L337.0 454.37 L338.0 453.11 L339.0 451.66 L340.0 450.00 L341.0 448.38 L342.0 446.81 L343.0 445.35 L344.0 443.94 L345.0 442.22 L346.0 440.58 L347.0 438.94 L348.0 437.52 L349.0 436.23 L350.0 434.76 L351.0 433.11 L352.0 431.35 L353.0 429.60 L354.0 427.93 L355.0 426.36 L356.0 424.90 L357.0 423.28 L358.0 421.44 L359.0 419.55 L360.0 417.82 L361.0 416.23 L362.0 414.47 L363.0 412.73 L364.0 411.28 L365.0 409.58 L366.0 407.76 L367.0 405.98 L368.0 404.36 L369.0 402.80 L370.0 401.04 L371.0 399.43 L372.0 397.94 L373.0 396.37 L374.0 394.58 L375.0 392.76 L376.0 391.13 L377.0 389.69 L378.0 388.17 L379.0 386.54 L380.0 385.02 L381.0 383.39 L382.0 381.71 L383.0 380.30 L384.0 379.09 L385.0 377.73 L386.0 376.12 L387.0 374.44 L388.0 372.89 L389.0 371.49 L390.0 369.92 L391.0 368.29 L392.0 366.89 L393.0 365.41 L394.0 364.01 L395.0 362.58 L396.0 361.12 L397.0 359.64 L398.0 358.00 L399.0 356.27 L400.0 354.78 L401.0 353.49 L402.0 351.91 L403.0 350.11 L404.0 348.60 L405.0 347.51 L406.0 346.26 L407.0 344.61 L408.0 342.91 L409.0 341.23 L410.0 339.47 L411.0 338.14 L412.0 336.95 L413.0 335.40 L414.0 333.71 L415.0 332.42 L416.0 331.02 L417.0 329.49 L418.0 327.86 L419.0 326.26 L420.0 324.71 L421.0 323.35 L422.0 321.89 L423.0 320.27 L424.0 318.79 L425.0 317.36 L426.0 316.04 L427.0 314.52 L428.0 312.88 L429.0 311.72 L430.0 310.51 L431.0 309.05 L432.0 307.68 L433.0 306.32 L434.0 304.95 L435.0 303.79 L436.0 302.68 L437.0 301.38 L438.0 300.11 L439.0 298.78 L440.0 297.40 L441.0 295.99 L442.0 294.76 L443.0 293.59 L444.0 292.19 L445.0 290.63 L446.0 289.08 L447.0 287.70 L448.0 286.45 L449.0 285.02 L450.0 283.45 L451.0 282.16 L452.0 280.85 L453.0 279.39 L454.0 278.00 L455.0 276.79 L456.0 275.21 L457.0 273.48 L458.0 272.14 L459.0 271.02 L460.0 269.81 L461.0 268.56 L462.0 267.38 L463.0 266.22 L464.0 265.06 L465.0 263.96 L466.0 262.86 L467.0 261.56 L468.0 260.66 L469.0 259.80 L470.0 258.58 L471.0 257.51 L472.0 256.73 L473.0 255.64 L474.0 254.34 L475.0 253.14 L476.0 252.07 L477.0 251.01 L478.0 249.95 L479.0 248.93 L480.0 247.98 L481.0 246.83 L482.0 245.65 L483.0 244.71 L484.0 243.83 L485.0 242.73 L486.0 241.77 L487.0 241.26 L488.0 240.54 L489.0 239.74 L490.0 239.21 L491.0 238.93 L492.0 238.58 L493.0 238.09 L494.0 237.80 L495.0 237.62 L496.0 237.59 L497.0 237.50 L498.0 237.58 L499.0 237.93 L500.0 238.23 L501.0 238.43 L502.0 238.58 L503.0 238.87 L504.0 239.06 L505.0 239.22 L506.0 239.28 L507.0 239.42 L508.0 239.40 L509.0 239.42 L510.0 239.41 L511.0 239.20 L512.0 239.31 L513.0 239.55 L514.0 239.39 L515.0 239.44 L516.0 239.69 L517.0 239.79 L518.0 239.66 L519.0 239.59 L520.0 239.55 L521.0 239.72 L522.0 240.02 L523.0 240.22 L524.0 240.50 L525.0 240.95 L526.0 241.44 L527.0 241.94 L528.0 242.43 L529.0 243.06 L530.0 243.90 L531.0 244.77 L532.0 245.98 L533.0 247.24 L534.0 248.32 L535.0 249.27 L536.0 250.02 L537.0 250.99 L538.0 251.98 L539.0 252.95 L540.0 253.93 L541.0 255.11 L542.0 256.44 L543.0 257.60 L544.0 258.66 L545.0 259.61 L546.0 260.43 L547.0 261.18 L548.0 262.16 L549.0 263.26 L550.0 264.21 L551.0 264.97 L552.0 265.82 L553.0 266.91 L554.0 268.16 L555.0 269.26 L556.0 270.39 L557.0 271.75 L558.0 273.25 L559.0 274.66 L560.0 276.26 L561.0 277.86 L562.0 279.49 L563.0 281.27 L564.0 283.21 L565.0 285.17 L566.0 286.80 L567.0 288.46 L568.0 290.10 L569.0 291.92 L570.0 294.13 L571.0 296.13 L572.0 297.84 L573.0 299.90 L574.0 302.12 L575.0 304.10 L576.0 306.10 L577.0 308.51 L578.0 310.78 L579.0 312.94 L580.0 315.07 L581.0 317.40 L582.0 319.61 L583.0 321.65 L584.0 323.80 L585.0 325.85 L586.0 327.88 L587.0 329.91 L588.0 331.97 L589.0 334.08 L590.0 336.23 L591.0 338.13 L592.0 340.09 L593.0 342.31 L594.0 344.37 L595.0 346.35 L596.0 348.29 L597.0 350.29 L598.0 352.21 L599.0 354.16 L600.0 356.30 L601.0 358.43 L602.0 360.53 L603.0 362.55 L604.0 364.44 L605.0 366.56 L606.0 368.63 L607.0 370.77 L608.0 372.96 L609.0 375.08 L610.0 377.28 L611.0 379.69 L612.0 382.11 L613.0 384.66 L614.0 387.16 L615.0 389.54 L616.0 392.14 L617.0 395.12 L618.0 398.19 L619.0 401.07 L620.0 403.81 L621.0 406.61 L622.0 409.48 L623.0 412.30 L624.0 415.06 L625.0 417.65 L626.0 420.18 L627.0 422.68 L628.0 425.24 L629.0 427.63 L630.0 430.01 L631.0 432.41 L632.0 434.92 L633.0 437.45 L634.0 439.89 L635.0 442.25 L636.0 444.54 L637.0 447.08 L638.0 449.73 L639.0 452.25 L640.0 454.96 L641.0 457.95 L642.0 461.16 L643.0 464.59 L644.0 468.07 L645.0 471.35 L646.0 474.55 L647.0 477.76 L648.0 481.18 L649.0 484.70 L650.0 487.71 L651.0 490.59 L652.0 493.39 L653.0 496.10 L654.0 498.72 L655.0 501.41 L656.0 504.06 L657.0 506.51 L658.0 509.09 L659.0 511.69 L660.0 514.26 L661.0 516.75 L662.0 519.30 L663.0 521.71 L664.0 524.14 L665.0 526.75 L666.0 529.41 L667.0 532.06 L668.0 534.83 L669.0 537.54 L670.0 540.03 L671.0 542.70 L672.0 545.29 L673.0 547.77 L674.0 550.36 L675.0 553.06 L676.0 555.57 L677.0 557.82 L678.0 559.96 L679.0 561.91 L680.0 563.71 L681.0 565.65 L682.0 567.61 L683.0 569.43 L684.0 570.95 L685.0 572.69 L686.0 574.62 L687.0 576.50 L688.0 578.47 L689.0 580.53 L690.0 582.58 L691.0 584.68 L692.0 586.71 L693.0 588.66 L694.0 590.75 L695.0 592.79 L696.0 595.11 L697.0 597.09 L698.0 598.79 L699.0 600.50 L700.0 601.98 L701.0 603.40 L702.0 604.77 L703.0 606.02 L704.0 607.28 L705.0 608.57 L706.0 609.77 L707.0 610.94 L708.0 612.06 L709.0 613.32 L710.0 614.79 L711.0 615.90 L712.0 616.81 L713.0 617.98 L714.0 619.02 L715.0 619.89 L716.0 621.07 L717.0 622.43 L718.0 623.76 L719.0 624.90 L720.0 625.94 L721.0 626.95 L722.0 627.96 L723.0 628.92 L724.0 630.12 L725.0 631.22 L726.0 632.17 L727.0 633.41 L728.0 634.73 L729.0 635.84 L730.0 636.62 L731.0 637.16 L732.0 637.78 L733.0 638.41 L734.0 639.01 L735.0 639.33 L736.0 639.66 L737.0 640.15 L738.0 640.84 L739.0 641.39 L740.0 641.76 L741.0 642.21 L742.0 642.82 L743.0 643.38 L744.0 643.70 L745.0 644.21 L746.0 644.80 L747.0 645.38 L748.0 645.95 L749.0 646.41 L750.0 646.87 L751.0 647.45 L752.0 647.91 L753.0 648.26 L754.0 648.61 L755.0 648.98 L756.0 649.49 L757.0 649.91 L758.0 650.33 L759.0 650.78 L760.0 651.08 L761.0 651.43 L762.0 651.74 L763.0 651.92 L764.0 651.96 L765.0 652.08 L766.0 652.20 L767.0 652.05 L768.0 651.72 L769.0 651.56 L770.0 651.60 L771.0 651.58 L772.0 651.45 L773.0 651.41 L774.0 651.48 L775.0 651.72 L776.0 652.02 L777.0 652.01 L778.0 651.71 L779.0 651.56 L780.0 651.44 L781.0 651.43 L782.0 651.57 L783.0 651.59 L784.0 651.50 L785.0 651.46 L786.0 651.35 L787.0 651.26 L788.0 651.06 L789.0 650.94 L790.0 650.75 L791.0 650.60 L792.0 650.42 L793.0 650.10 L794.0 649.95 L795.0 649.90 L796.0 649.79 L797.0 649.62 L798.0 649.32 L799.0 649.06 L800.0 648.95 L801.0 648.75 L802.0 648.48 L803.0 648.35 L804.0 648.11 L805.0 647.80 L806.0 647.43 L807.0 647.08 L808.0 646.91 L809.0 646.49 L810.0 646.20 L811.0 645.98 L812.0 645.65 L813.0 645.26 L814.0 644.86 L815.0 644.59 L816.0 644.43 L817.0 644.22 L818.0 643.82 L819.0 643.57 L820.0 643.28 L821.0 642.89 L822.0 642.50 L823.0 642.12 L824.0 641.74 L825.0 641.58 L826.0 641.35 L827.0 641.02 L828.0 640.77 L829.0 640.44 L830.0 640.08 L831.0 639.84 L832.0 639.59 L833.0 639.39 L834.0 638.82 L835.0 638.38 L836.0 638.15 L837.0 638.05 L838.0 637.92 L839.0 637.63 L840.0 637.49 L841.0 637.55 L842.0 637.38 L843.0 637.07 L844.0 636.82 L845.0 636.63 L846.0 636.71 L847.0 636.72 L848.0 636.34 L849.0 636.11 L850.0 636.04 L851.0 635.90 L852.0 635.95 L853.0 635.73 L854.0 635.60 L855.0 635.66 L856.0 635.69 L857.0 635.43 L858.0 635.02 L859.0 634.90 L860.0 634.91 L861.0 634.73 L862.0 634.71 L863.0 634.72 L864.0 634.81 L865.0 634.65 L866.0 634.29 L867.0 634.35 L868.0 634.34 L869.0 634.10 L870.0 633.91 L871.0 633.79 L872.0 633.81 L873.0 633.90 L874.0 633.96 L875.0 633.83 L876.0 633.52 L877.0 633.35 L878.0 633.27 L879.0 632.95 L880.0 633.02 L881.0 633.40 L882.0 633.56 L883.0 633.35 L884.0 633.29 L885.0 633.35 L886.0 633.58 L887.0 633.83 L888.0 634.07 L889.0 634.42 L890.0 634.73 L891.0 635.03 L892.0 635.21 L893.0 635.41 L894.0 635.83 L895.0 636.18 L896.0 636.38 L897.0 636.70 L898.0 636.82 L899.0 636.82 L900.0 636.89 L901.0 636.92 L902.0 637.02 L903.0 637.29 L904.0 637.40 L905.0 637.34 L906.0 637.38 L907.0 637.52 L908.0 637.75 L909.0 637.86 L910.0 637.78 L911.0 637.87 L912.0 638.05 L913.0 638.32 L914.0 638.56 L915.0 638.55 L916.0 638.69 L917.0 639.11 L918.0 639.54 L919.0 640.08 L920.0 640.32 L921.0 640.62 L922.0 641.02 L923.0 641.35 L924.0 641.62 L925.0 641.98 L926.0 642.33 L927.0 642.56 L928.0 642.84 L929.0 642.77 L930.0 642.65 L931.0 642.86 L932.0 642.94 L933.0 643.28 L934.0 643.67 L935.0 643.68 L936.0 643.59 L937.0 643.83 L938.0 644.35 L939.0 644.83 L940.0 645.12 L941.0 645.58 L942.0 645.94 L943.0 646.25 L944.0 646.69 L945.0 647.12 L946.0 647.25 L947.0 647.63 L948.0 648.28 L949.0 648.67 L950.0 648.81 L951.0 649.11 L952.0 649.57 L953.0 650.10 L954.0 650.53 L955.0 651.05 L956.0 651.36 L957.0 651.55 L958.0 651.77 L959.0 652.03 L960.0 652.24 L961.0 652.38 L962.0 652.59 L963.0 652.82 L964.0 653.01 L965.0 653.25 L966.0 653.37 L967.0 653.56 L968.0 654.00 L969.0 654.50 L970.0 654.70 L971.0 654.71 L972.0 655.03 L973.0 655.33 L974.0 655.62 L975.0 655.92 L976.0 656.22 L977.0 656.51 L978.0 656.84 L979.0 657.13 L980.0 657.29 L981.0 657.51 L982.0 657.82 L983.0 658.22 L984.0 658.64 L985.0 658.88 L986.0 659.23 L987.0 659.62 L988.0 659.95 L989.0 660.20 L990.0 660.45 L991.0 660.57 L992.0 660.73 L993.0 660.85 L994.0 660.87 L995.0 661.19 L996.0 661.50 L997.0 661.55 L998.0 661.70 L999.0 662.00 L1000.0 662.10 L1001.0 662.11 L1002.0 662.01 L1003.0 662.24 L1004.0 662.48 L1005.0 662.73 L1006.0 662.91 L1007.0 662.87 L1008.0 662.75 L1009.0 662.71 L1010.0 663.11 L1011.0 663.38 L1012.0 663.33 L1013.0 663.32 L1014.0 663.50 L1015.0 663.70 L1016.0 663.84 L1017.0 663.92 L1018.0 663.72 L1019.0 663.67 L1020.0 663.95 L1021.0 664.13 L1022.0 664.08 L1023.0 664.08 L1024.0 664.06 L1025.0 664.05 L1026.0 664.10 L1027.0 664.17 L1028.0 664.48 L1029.0 664.73 L1030.0 664.79 L1031.0 664.69 L1032.0 664.64 L1033.0 664.62 L1034.0 664.82 L1035.0 665.29 L1036.0 665.53 L1037.0 665.29 L1038.0 665.32 L1039.0 665.50 L1040.0 665.52 L1041.0 665.63 L1042.0 665.67 L1043.0 665.77 L1044.0 665.92 L1045.0 665.86 L1046.0 665.83 L1047.0 666.00 L1048.0 666.00 L1049.0 665.89 L1050.0 665.90 L1051.0 665.98 L1052.0 665.95 L1053.0 666.03 L1054.0 666.13 L1055.0 666.10 L1056.0 666.06 L1057.0 665.93 L1058.0 666.04 L1059.0 666.20 L1060.0 666.27 L1061.0 666.16 L1062.0 666.11 L1063.0 665.97 L1064.0 665.81 L1065.0 665.79 L1066.0 665.90 L1067.0 666.01 L1068.0 665.95 L1069.0 666.02 L1070.0 666.19 L1071.0 666.27 L1072.0 666.27 L1073.0 666.18 L1074.0 665.92 L1075.0 665.91 L1076.0 666.07 L1077.0 666.18 L1078.0 666.08 L1079.0 665.92 L1080.0 665.85 L1081.0 665.81 L1082.0 665.90 L1083.0 665.81 L1084.0 665.94 L1085.0 666.06 L1086.0 665.87 L1087.0 665.51 L1088.0 665.41 L1089.0 665.28 L1090.0 665.21 L1091.0 665.19 L1092.0 664.87 L1093.0 664.46 L1094.0 664.33 L1095.0 664.36 L1096.0 664.16 L1097.0 663.78 L1098.0 663.53 L1099.0 663.47 L1100.0 663.45 L1101.0 663.37 L1102.0 663.18 L1103.0 663.11 L1104.0 662.92 L1105.0 662.51 L1106.0 662.42 L1107.0 662.45 L1108.0 662.19 L1109.0 662.02 L1110.0 661.88 L1111.0 661.56 L1112.0 661.28 L1113.0 661.07 L1114.0 661.04 L1115.0 660.85 L1116.0 660.53 L1117.0 660.28 L1118.0 660.40 L1119.0 660.30 L1120.0 660.04 L1121.0 659.83 L1122.0 659.43 L1123.0 659.28 L1124.0 659.24 L1125.0 659.23 L1126.0 658.72 L1127.0 658.47 L1128.0 658.49 L1129.0 658.54 L1130.0 658.42 L1131.0 658.17 L1132.0 657.99 L1133.0 657.88 L1134.0 657.47 L1135.0 657.23 L1136.0 656.98 L1137.0 656.40 L1138.0 656.05 L1139.0 655.92 L1140.0 655.51 L1141.0 655.01 L1142.0 654.83 L1143.0 654.67 L1144.0 654.24 L1145.0 653.88 L1146.0 653.49 L1147.0 653.19 L1148.0 653.13 L1149.0 652.97 L1150.0 652.70 L1151.0 652.38 L1152.0 652.17 L1153.0 652.04 L1154.0 651.86 L1155.0 651.61 L1156.0 651.47 L1157.0 651.38 L1158.0 651.05 L1159.0 650.84 L1160.0 650.70 L1161.0 650.48 L1162.0 650.26 L1163.0 650.19 L1164.0 650.17 L1165.0 649.94 L1166.0 649.79 L1167.0 649.74 L1168.0 649.46 L1169.0 649.39 L1170.0 649.16 L1171.0 648.80 L1172.0 648.66 L1173.0 648.62 L1174.0 648.64 L1175.0 648.44 L1176.0 648.04 L1177.0 647.66 L1178.0 647.44 L1179.0 647.36 L1180.0 647.18 L1181.0 647.10 L1182.0 647.02 L1183.0 646.95 L1184.0 646.84 L1185.0 646.61 L1186.0 646.40 L1187.0 646.22 L1188.0 646.16 L1189.0 646.06 L1190.0 645.95 L1191.0 645.67 L1192.0 645.19 L1193.0 644.92 L1194.0 644.98 L1195.0 644.91 L1196.0 644.70 L1197.0 644.68 L1198.0 644.53 L1199.0 644.39 L1200.0 644.27 L1201.0 644.02 L1202.0 643.91 L1203.0 643.96 L1204.0 643.95 L1205.0 643.99 L1206.0 643.87 L1207.0 643.62 L1208.0 643.71 L1209.0 643.76 L1210.0 643.55 L1211.0 643.53 L1212.0 643.44 L1213.0 643.45 L1214.0 643.74 L1215.0 643.78 L1216.0 643.58 L1217.0 643.60 L1218.0 643.85 L1219.0 643.97 L1220.0 644.02 L1221.0 644.19 L1222.0 644.32 L1223.0 644.47 L1224.0 644.70 L1225.0 644.88 L1226.0 645.10 L1227.0 645.24 L1228.0 645.37 L1229.0 645.60 L1230.0 645.94 L1231.0 646.22 L1232.0 646.33 L1233.0 646.42 L1234.0 646.64 L1235.0 646.72 L1236.0 646.87 L1237.0 647.22 L1238.0 647.59 L1239.0 647.84 L1240.0 648.06 L1241.0 648.32 L1242.0 648.44 L1243.0 648.53 L1244.0 648.76 L1245.0 648.96 L1246.0 649.24 L1247.0 649.53 L1248.0 649.68 L1249.0 649.84 L1250.0 650.21 L1251.0 650.57 L1252.0 650.88 L1253.0 651.11 L1254.0 651.30 L1255.0 651.63 L1256.0 652.19 L1257.0 652.61 L1258.0 652.86 L1259.0 653.20 L1260.0 653.65 L1261.0 653.87 L1262.0 654.07 L1263.0 654.37 L1264.0 654.63 L1265.0 654.93 L1266.0 655.18 L1267.0 655.40 L1268.0 655.55 L1269.0 655.74 L1270.0 656.07 L1271.0 656.31 L1272.0 656.33 L1273.0 656.46 L1274.0 656.73 L1275.0 657.11 L1276.0 657.35 L1277.0 657.57 L1278.0 657.72 L1279.0 657.97 L1280.0 658.11 L1281.0 658.32 L1282.0 658.61 L1283.0 658.76 L1284.0 658.96 L1285.0 659.27 L1286.0 659.49 L1287.0 659.82 L1288.0 660.03 L1289.0 659.89 L1290.0 659.83 L1291.0 659.86 L1292.0 660.09 L1293.0 660.45 L1294.0 660.67 L1295.0 660.81 L1296.0 660.91 L1297.0 660.87 L1298.0 661.00 L1299.0 661.39 L1300.0 661.64 L1301.0 661.80 L1302.0 661.88 L1303.0 661.96 L1304.0 661.94" fill="none" stroke="#f0901c" stroke-width="1.2" stroke-linejoin="round"/>
<!-- cursor lines -->
<line x1="133.5" y1="42" x2="133.5" y2="739" stroke="#e8e8e8" stroke-width="1.3"/>
<line x1="761.2" y1="42" x2="761.2" y2="739" stroke="#d8d8d8" stroke-width="1.3"/>
<!-- zoom triangle -->
<path d="M1274 47.8 H1297 Q1299 47.8 1299 50 V72.7 Z" fill="#6a6a6a"/>
<circle cx="1293.7" cy="52.4" r="3.6" fill="#5a5a5a" stroke="#d8d8d8" stroke-width="1.5"/>
<line x1="1291" y1="55.2" x2="1287" y2="59.3" stroke="#d8d8d8" stroke-width="2" stroke-linecap="round"/>
<!-- yellow trigger level arrow -->
<path d="M1288 430 L1298 422 V428.5 H1304 V431.5 H1298 V438 Z" fill="#ffff30"/>
<!-- big T trigger marker -->
<path d="M646 42.3 H661 L653.5 49.3 Z" fill="#ffb020"/>
<path d="M646.8 50.6 H660.2 V64.8 H656.5 L653.5 70.5 L650.5 64.8 H646.8 Z" fill="#000" stroke="#ffaa20" stroke-width="1.6"/>
<text x="653.5" y="62" font-size="11" font-weight="bold" fill="#ffb030" text-anchor="middle" font-family="Liberation Sans">T</text>
<!-- cursor markers on traces -->
<g stroke="#d0d0d0" stroke-width="1.2" fill="none">
<circle cx="133.5" cy="669.5" r="2.6"/>
<path d="M128 664 L130.5 666.5 M139 664 L136.5 666.5 M128 675 L130.5 672.5 M139 675 L136.5 672.5"/>
<circle cx="761.2" cy="652.5" r="2.6"/>
<path d="M755.7 647 L758.2 649.5 M766.7 647 L764.2 649.5 M755.7 658 L758.2 655.5 M766.7 658 L764.2 655.5"/>
</g>
<!-- channel markers left -->
<path d="M5.5 591 H22 L32 600.3 L22 609.7 H5.5 Z" fill="#142010" stroke="#90d030" stroke-width="1.3"/>
<text x="11.5" y="603.8" font-size="8.8" font-weight="bold" fill="#88d030" font-family="Liberation Sans" letter-spacing="2.2">C4</text>
<path d="M5.5 661 H22 L31 669.6 L22 678.3 H5.5 Z" fill="#ffb020"/>
<text x="10.2" y="673.5" font-size="8.8" font-weight="bold" fill="#2a1a00" font-family="Liberation Sans" letter-spacing="2">M1</text>
</g>
<!-- cursor labels -->
<rect x="110" y="42.4" width="22.7" height="14.8" rx="2.5" fill="#ffaa2a"/>
<text x="121.3" y="53.2" font-size="11" fill="#4a1e00" text-anchor="middle" font-family="Liberation Sans" stroke="#4a1e00" stroke-width="0.35">M1</text>
<circle cx="140.8" cy="49.8" r="6.7" fill="#2aa4ee"/>
<text x="140.8" y="53.8" font-size="10.5" fill="#ffffff" text-anchor="middle" font-family="Liberation Sans" font-weight="bold">A</text>
<circle cx="752.8" cy="49.6" r="6.7" fill="#2aa4ee"/>
<text x="752.8" y="53.6" font-size="10.5" fill="#ffffff" text-anchor="middle" font-family="Liberation Sans" font-weight="bold">B</text>
<rect x="762" y="42.4" width="22.8" height="14.8" rx="2.5" fill="#ffaa2a"/>
<text x="773.4" y="53.2" font-size="11" fill="#4a1e00" text-anchor="middle" font-family="Liberation Sans" stroke="#4a1e00" stroke-width="0.35">M1</text>
</svg>

<div class="ro" style="left:28.6px;top:63.2px;width:103.6px;height:32.6px">t: -16.007 ns
w: -9.929 W</div>
<div class="ro" style="left:335.2px;top:63.2px;width:222.8px;height:35.3px;line-height:15px;padding-top:4px">Δt: 19.297 ns
Δw: 496.672 W<span class="a" style="left:88.6px;top:4px">1/Δt: 51.82 MHz</span><span class="a" style="left:96.2px;top:19px">Δw/Δt: 25.74 GW/s</span></div>
<div class="ro" style="left:762.5px;top:63.2px;width:103px;height:32.5px">t: 3.290 ns
w: 486.743 W</div>

<!-- right panel -->
<div class="a" style="left:1318px;top:21px;width:120px;height:720.5px;border:1px solid #6a6560;background:#333"></div>
<div class="a" style="left:1307px;top:21px;width:10px;height:783px;background:#363636"></div>
<div class="a" style="left:1310.8px;top:373.6px;width:3px;height:3px;border-radius:50%;background:#e8e8e8"></div>
<div class="a" style="left:1310.8px;top:380px;width:3px;height:3px;border-radius:50%;background:#e8e8e8"></div>
<div class="a" style="left:1310.8px;top:386.2px;width:3px;height:3px;border-radius:50%;background:#e8e8e8"></div>
<div class="a" style="left:1318px;top:23px;width:112px;text-align:center;font-size:12px;font-weight:bold;color:#f4f4f4">Add New...</div>
<div class="btn" style="left:1324px;top:40px">Cursors</div>
<div class="btn" style="left:1378px;top:40px">Callout</div>
<div class="btn" style="left:1324px;top:74px">Measure</div>
<div class="btn" style="left:1378px;top:74px">Search</div>
<div class="btn" style="left:1324px;top:108.5px;line-height:12px;padding-top:1px">Results<br>Table</div>
<div class="btn" style="left:1378px;top:108.5px">Plot</div>
<div class="a" style="left:1320px;top:141px;width:108px;height:1px;background:#5a5248"></div>
<div class="btn" style="left:1324px;top:146px"><svg class="a" style="left:0;top:0" width="45" height="25" viewBox="0 0 45 25"><rect x="15.3" y="5" width="15" height="13" fill="none" stroke="#f0f0f0" stroke-width="1.6" stroke-dasharray="2.2 2.4"/><circle cx="23.8" cy="9.8" r="3.4" fill="#2e2e2e" stroke="#e8e8e8" stroke-width="1.4"/><line x1="21.4" y1="12.2" x2="18.5" y2="15" stroke="#e8e8e8" stroke-width="2" stroke-linecap="round"/><path d="M27.5 15.5 L32.5 19.5 L30.3 20 L32 22.6 L30.8 23.3 L29.2 20.8 L27.8 22.3 Z" fill="#f0f0f0"/></svg></div>
<div class="btn" style="left:1378px;top:146px">More...</div>
<div class="a" style="left:1320px;top:179px;width:108px;height:1px;background:#5a5248"></div>

<div class="a" style="left:1320.5px;top:190px;width:107.5px;height:42px;border-radius:4px;overflow:hidden;background:#fafafa">
 <div style="height:14px;background:#777;color:#f5f5f5;font-size:12px;line-height:14px;padding-left:4px;position:relative;-webkit-text-stroke:0.25px #f5f5f5">Meas 1<span style="position:absolute;right:3px;top:2.5px;width:17px;height:9px;border-radius:4px;background:#f5a830;color:#5a3000;font-size:7.5px;line-height:9px;text-align:center;-webkit-text-stroke:0;border:0.5px solid #a06010">M1</span></div>
 <div style="font-size:11.5px;font-weight:normal;-webkit-text-stroke:0.5px #111;color:#111;line-height:14px;padding-left:4px">Area<br>µ': 123.6 µJ</div>
</div>
<div class="a" style="left:1320.5px;top:238px;width:107.5px;height:42.5px;border-radius:4px;overflow:hidden;background:#fafafa">
 <div style="height:14px;background:#777;color:#f5f5f5;font-size:12px;line-height:14px;padding-left:4px;position:relative;-webkit-text-stroke:0.25px #f5f5f5">Search 1<span style="position:absolute;right:3px;top:2.5px;width:17px;height:9px;border-radius:4.5px;background:#e84068;color:#fff;font-size:7.5px;line-height:9px;text-align:center;-webkit-text-stroke:0">3</span></div>
 <div style="font-size:11.5px;font-weight:normal;-webkit-text-stroke:0.5px #111;color:#111;line-height:14px;padding-left:4px">Search: Edge<br>Events: --</div>
 <svg class="a" style="left:90px;top:16px" width="14" height="10"><path d="M0.5 0.5 H13.5 L7 9.5 Z" fill="#f5a8e8"/></svg>
</div>

<!-- bottom bar -->
<div class="badge" style="left:3px;width:67px">
 <div class="h" style="background:#686420;color:#ffff40">Ch 1</div>
 <div class="b">100 V/div<br>1 MΩ<br>500 MHz <span style="font-size:7px;font-weight:normal;position:relative;top:-4px;letter-spacing:-0.5px">Bw</span></div>
</div>
<div class="badge" style="left:74px;width:67px;background:#a9a9a9">
 <div class="h" style="background:#c8445c;color:#f8d0d8">Ch 3</div>
 <div class="b">1 V/div<br><svg width="14" height="12" style="vertical-align:-1px"><path d="M2.5 10 V7 Q2.5 2 7 2 Q11.5 2 11.5 7 V10" fill="none" stroke="#333" stroke-width="1"/><path d="M4 5 Q7 4 9 6" fill="none" stroke="#333" stroke-width="0.9"/><rect x="2" y="8" width="1.6" height="3" fill="#333"/><rect x="10.6" y="8" width="1.6" height="3" fill="#333"/></svg><br>200 MHz <span style="font-size:7px;font-weight:normal;position:relative;top:-4px;letter-spacing:-0.5px">Bw</span></div>
</div>
<div class="badge" style="left:144px;width:67px">
 <div class="h" style="background:#3c4a22;color:#a0f040">Ch 4 <svg width="12" height="12" style="position:absolute;left:35px;top:1px"><path d="M4.6 0.5 H7.4 V6 H10 L6 11.5 L2 6 H4.6 Z" fill="#a8f040"/></svg></div>
 <div class="b">5 A/div<br>1 MΩ<br>500 MHz <span style="font-size:7px;font-weight:normal;position:relative;top:-4px;letter-spacing:-0.5px">Bw</span></div>
</div>
<div class="badge" style="left:215px;width:67px">
 <div class="h" style="background:#ffb020;color:#3a1a00">Math 1</div>
 <div class="b">2 kW/div<br>Ch1 * Ch4</div>
</div>

<div class="nb" style="left:728.5px"><i style="background:#30d0e0"></i><div style="margin-top:22px;font-size:15px">2</div></div>
<div class="nb" style="left:762.5px"><i style="background:#f0a020"></i><div style="margin-top:22px;font-size:15px">5</div></div>
<div class="nb" style="left:796px"><i style="background:#2030e0"></i><div style="margin-top:22px;font-size:15px">6</div></div>
<div class="a" style="left:833.5px;top:745px;width:1px;height:56px;background:#555"></div>
<div class="nb" style="left:841.5px;font-size:12px;line-height:11.7px;letter-spacing:-0.4px"><i style="background:#9030c0"></i><div style="margin-top:15px">Add<br>New<br>Math</div></div>
<div class="nb" style="left:875px;font-size:12px;line-height:11.7px;letter-spacing:-0.4px"><i style="background:#e0e0e0"></i><div style="margin-top:15px">Add<br>New<br>Ref</div></div>
<div class="nb" style="left:908.5px;font-size:12px;line-height:11.7px;letter-spacing:-0.4px"><i style="background:#d050e0"></i><div style="margin-top:15px">Add<br>New<br>Bus</div></div>
<div class="a" style="left:945.5px;top:745px;width:1px;height:56px;background:#555"></div>

<div class="box" style="left:954px;width:148px">
 <div class="h">Horizontal</div>
 <div class="b"><div style="position:absolute;left:3px;top:0">4 ns/div<br>SR: 25 GS/s<br>RL: 1 kpts</div><div style="position:absolute;left:82px;top:0">40 ns<br>40 ps/pt (IT)<br><span style="color:#e08010;font-size:9px">&#9660;</span> 50%</div></div>
</div>
<div class="box" style="left:1107px;width:117px">
 <div class="h">Trigger</div>
 <div class="b"><div style="position:absolute;left:3px;top:0;width:118px">
  <span style="display:inline-block;width:22px;height:11px;border-radius:4px;background:#f8f040;border:1px solid #777;font-size:10px;line-height:10px;text-align:center;vertical-align:-1px">1</span>&nbsp;&nbsp;Pulse Width<br>
  <svg width="20" height="12" style="vertical-align:-2px"><path d="M2 10.5 H5 V3 H11 V10.5 H13" fill="none" stroke="#5a5ab0" stroke-width="1"/></svg>&nbsp;&lt; 18 µs<br>244 V</div></div>
</div>
<div class="box" style="left:1230px;width:110px">
 <div class="h">Acquisition</div>
 <div class="b"><div style="position:absolute;left:3px;top:0;width:104px">Auto,<span style="position:absolute;right:0">Analyze</span><br>High Res: 12 bits<br>36 Acqs</div></div>
</div>
<div class="a" style="left:1348.8px;top:745px;width:1px;height:56px;background:#555"></div>
<div class="a" style="left:1357.5px;top:744.5px;width:66px;height:26px;border-radius:5px;background:#f0222c;border:1px solid #b01818;color:#fff;font-size:10.5px;font-weight:bold;text-align:center;line-height:21px">Stopped</div>
<div class="a" style="left:1357.5px;top:775px;width:66px;height:26.5px;border-radius:3px;background:#fafafa;color:#111;font-size:11.5px;font-weight:normal;-webkit-text-stroke:0.5px #111;text-align:center;line-height:13px;padding-top:0.5px;white-space:nowrap;">01 Nov 2023<br>9:37:20 AM</div>
</body></html>
